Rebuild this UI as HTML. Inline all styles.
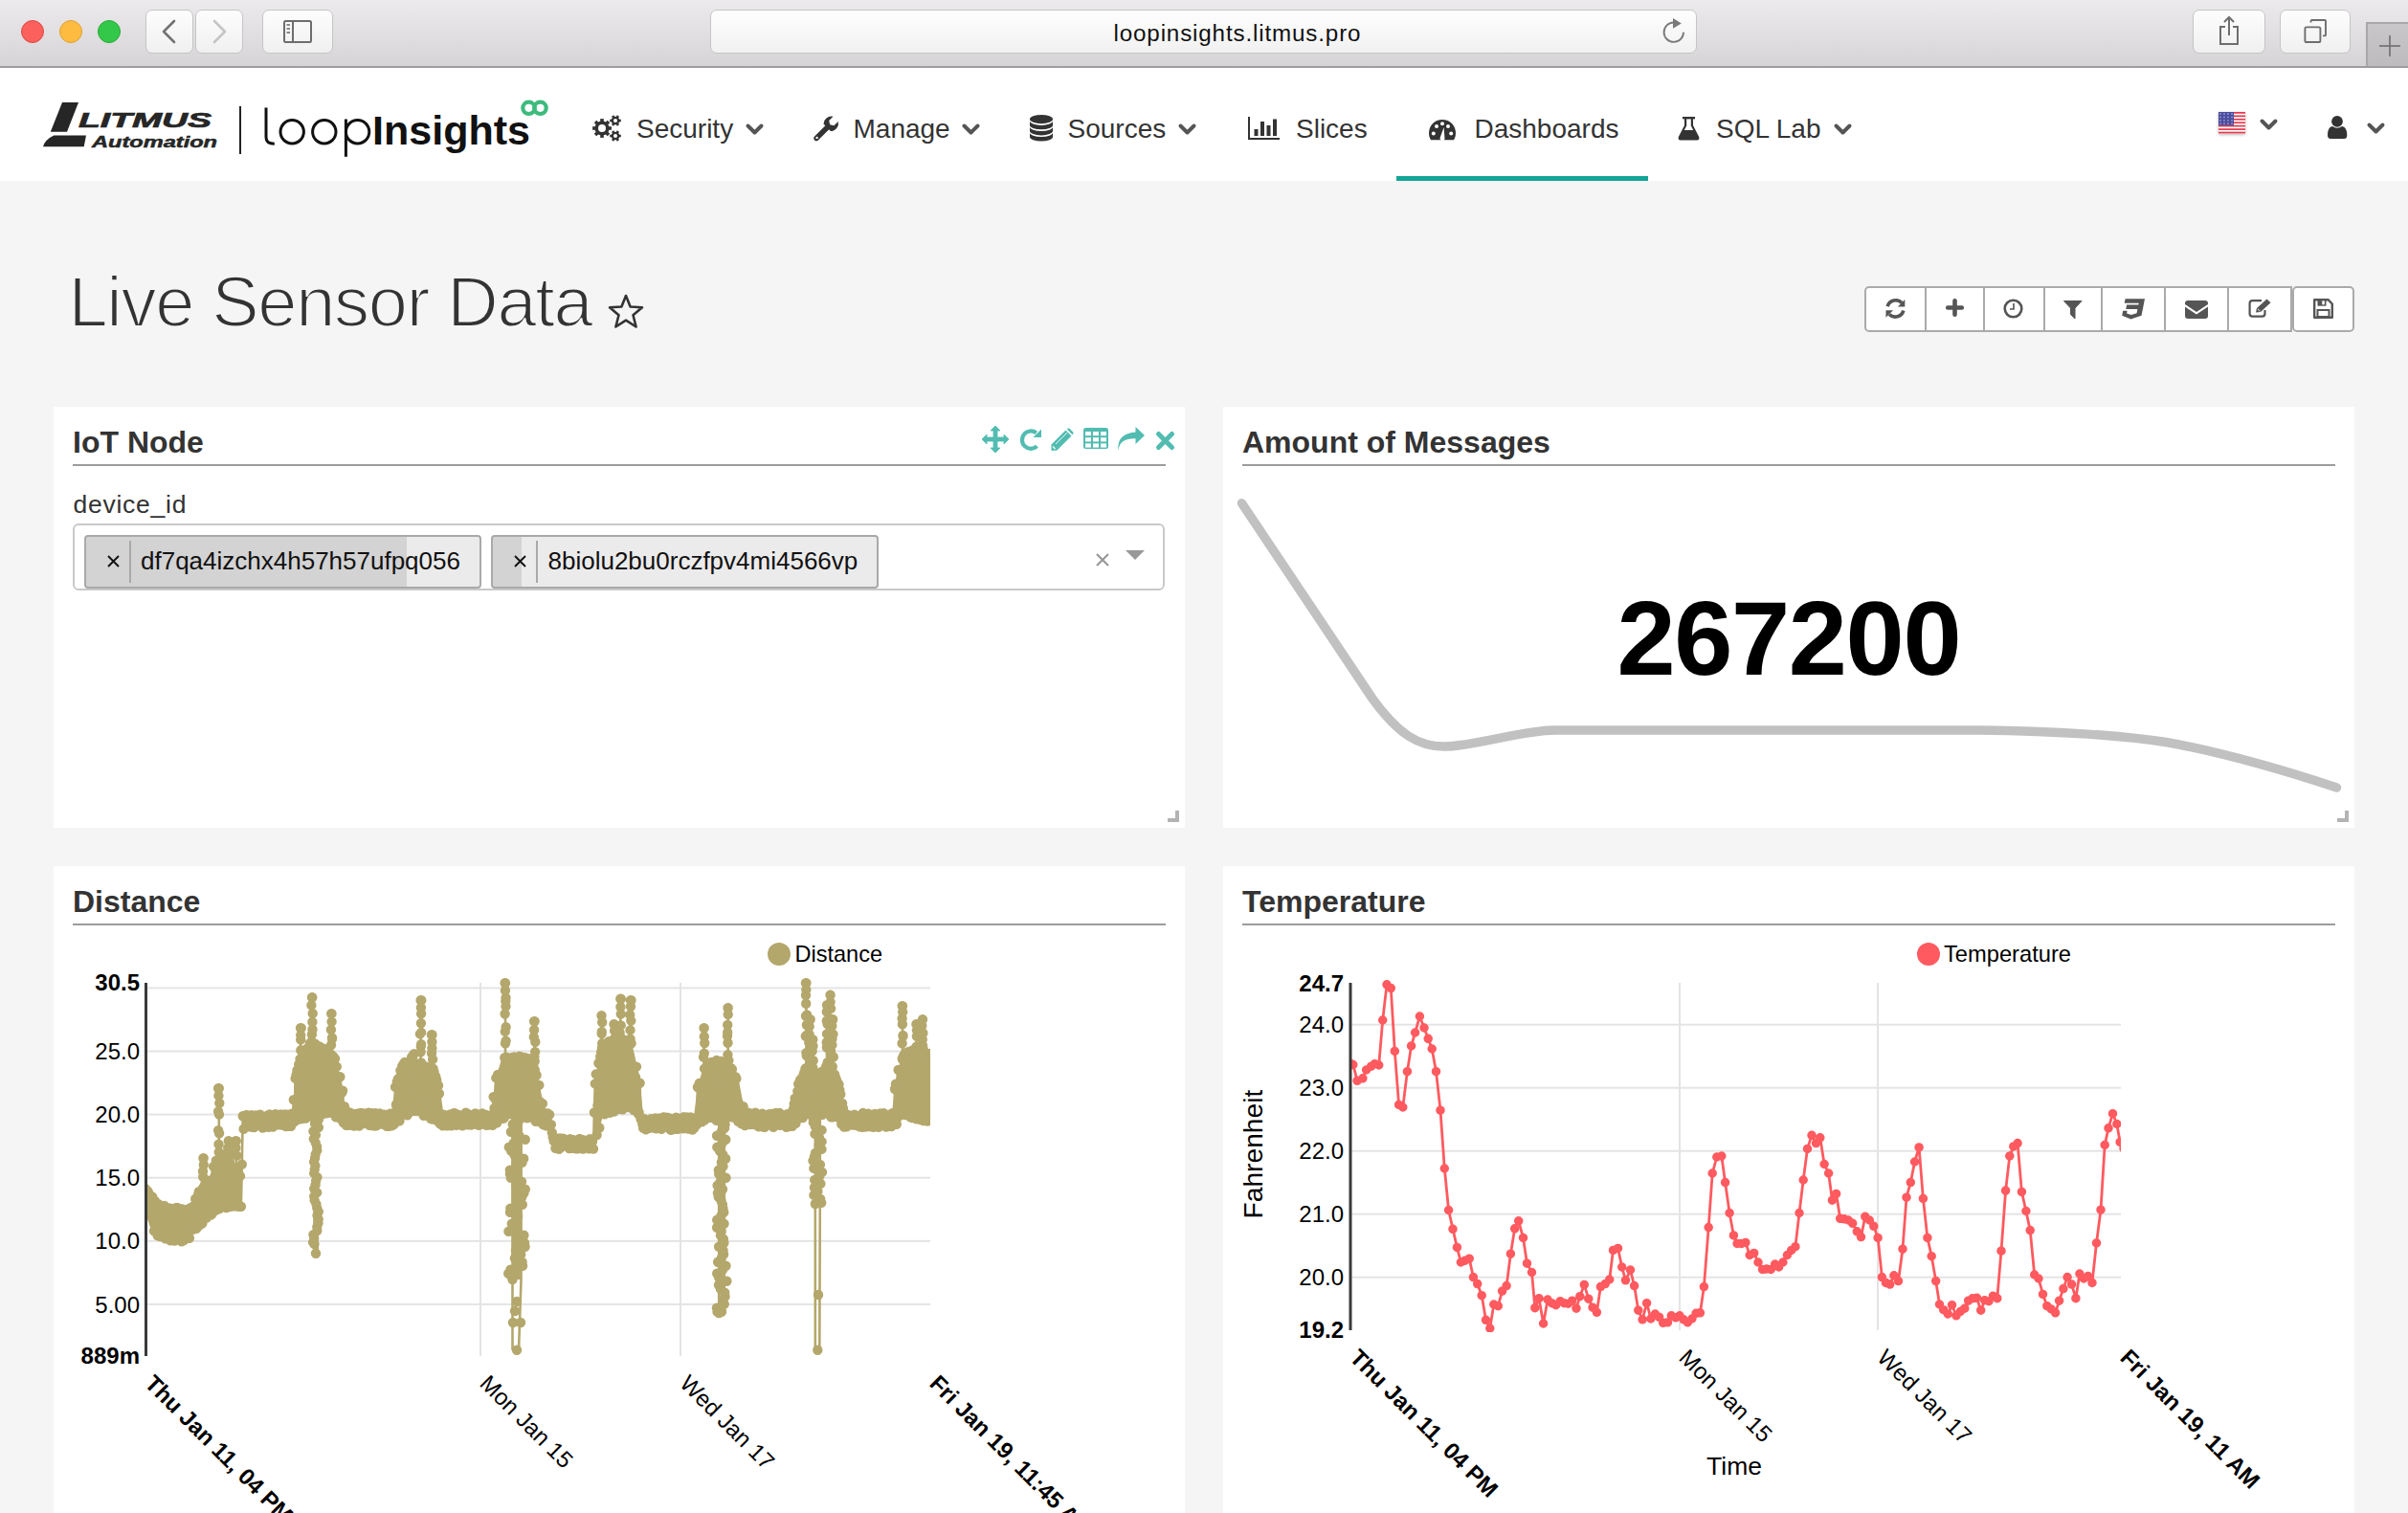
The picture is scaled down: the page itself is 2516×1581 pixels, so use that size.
<!DOCTYPE html>
<html><head><meta charset="utf-8"><title>Live Sensor Data</title>
<style>
html,body{margin:0;padding:0;}
body{width:2516px;height:1581px;position:relative;overflow:hidden;background:#f5f5f5;font-family:"Liberation Sans",sans-serif;}
.t{position:absolute;white-space:nowrap;}
svg{overflow:visible;}
</style></head><body>
<div style="position:absolute;left:0px;top:0px;width:2516px;height:69px;background:linear-gradient(#eceaec,#d6d4d6);"></div>
<div style="position:absolute;left:0px;top:69px;width:2516px;height:2px;background:#9e9c9e;"></div>
<div style="position:absolute;left:22px;top:21px;width:24px;height:24px;background:#fc605c;border-radius:50%;box-sizing:border-box;border:1px solid #de4a44;"></div>
<div style="position:absolute;left:62px;top:21px;width:24px;height:24px;background:#fdbc40;border-radius:50%;box-sizing:border-box;border:1px solid #dea235;"></div>
<div style="position:absolute;left:102px;top:21px;width:24px;height:24px;background:#34c84a;border-radius:50%;box-sizing:border-box;border:1px solid #27a935;"></div>
<div style="position:absolute;left:152px;top:10px;width:50px;height:46px;background:linear-gradient(#fdfdfd,#f0f0f0);border:1px solid #c6c5c6;border-radius:7px;box-sizing:border-box;"></div>
<div style="position:absolute;left:204px;top:10px;width:50px;height:46px;background:linear-gradient(#fdfdfd,#f0f0f0);border:1px solid #c6c5c6;border-radius:7px;box-sizing:border-box;"></div>
<div style="position:absolute;left:274px;top:10px;width:74px;height:46px;background:linear-gradient(#fdfdfd,#f0f0f0);border:1px solid #c6c5c6;border-radius:7px;box-sizing:border-box;"></div>
<svg style="position:absolute;left:168px;top:20px;" width="18" height="26" viewBox="0 0 18 26"><path d="M14 2 L3 13 L14 24" fill="none" stroke="#727272" stroke-width="2.6" stroke-linecap="round" stroke-linejoin="round"/></svg>
<svg style="position:absolute;left:220px;top:20px;" width="18" height="26" viewBox="0 0 18 26"><path d="M4 2 L15 13 L4 24" fill="none" stroke="#c4c4c4" stroke-width="2.6" stroke-linecap="round" stroke-linejoin="round"/></svg>
<svg style="position:absolute;left:295px;top:20px;" width="32" height="26" viewBox="0 0 32 26"><rect x="2" y="2" width="28" height="22" rx="1.5" fill="none" stroke="#6d6d6d" stroke-width="2"/><line x1="11" y1="2" x2="11" y2="24" stroke="#6d6d6d" stroke-width="2"/><line x1="4.5" y1="6" x2="8" y2="6" stroke="#6d6d6d" stroke-width="1.6"/><line x1="4.5" y1="10" x2="8" y2="10" stroke="#6d6d6d" stroke-width="1.6"/><line x1="4.5" y1="14" x2="8" y2="14" stroke="#6d6d6d" stroke-width="1.6"/></svg>
<div style="position:absolute;left:742px;top:10px;width:1031px;height:46px;background:linear-gradient(#fefefe,#f1f1f1);border:1px solid #c6c5c6;border-radius:7px;box-sizing:border-box;"></div>
<div class="t " style="left:1163.5px;top:21.10px;font-size:24.2px;line-height:27.03px;font-weight:normal;color:#111;letter-spacing:0.85px;">loopinsights.litmus.pro</div>
<svg style="position:absolute;left:1734px;top:19px;" width="28" height="28" viewBox="0 0 28 28"><path d="M25 14.7 A10.2 10.2 0 1 1 14.5 4.5" fill="none" stroke="#7a7a7a" stroke-width="1.9"/><path d="M14 0 L22.8 5.4 L14 10.8 Z" fill="#7a7a7a"/></svg>
<div style="position:absolute;left:2291px;top:10px;width:76px;height:46px;background:linear-gradient(#fdfdfd,#f0f0f0);border:1px solid #c6c5c6;border-radius:7px;box-sizing:border-box;"></div>
<div style="position:absolute;left:2382px;top:10px;width:74px;height:46px;background:linear-gradient(#fdfdfd,#f0f0f0);border:1px solid #c6c5c6;border-radius:7px;box-sizing:border-box;"></div>
<svg style="position:absolute;left:2317px;top:16px;" width="24" height="32" viewBox="0 0 24 32"><path d="M8 12 L3 12 L3 30 L21 30 L21 12 L16 12" fill="none" stroke="#6e6e6e" stroke-width="2"/><line x1="12" y1="2" x2="12" y2="21" stroke="#6e6e6e" stroke-width="2"/><path d="M7 7 L12 2 L17 7" fill="none" stroke="#6e6e6e" stroke-width="2"/></svg>
<svg style="position:absolute;left:2405px;top:19px;" width="30" height="28" viewBox="0 0 30 28"><rect x="3.4" y="9.4" width="16" height="15.6" rx="1.6" fill="none" stroke="#6e6e6e" stroke-width="1.9"/><path d="M9.6 4.4 L9.6 2.6 Q9.6 2 10.6 2 L24.2 2 Q25 2 25 3 L25 17.4 Q25 18.4 24 18.4 L22 18.4" fill="none" stroke="#6e6e6e" stroke-width="1.9"/></svg>
<div style="position:absolute;left:2472px;top:23px;width:44px;height:46px;background:linear-gradient(#c9c7c9,#bdbbbd);border-left:2px solid #a9a7a9;border-top:2px solid #a9a7a9;box-sizing:border-box;"></div>
<svg style="position:absolute;left:2485px;top:36px;" width="24" height="24" viewBox="0 0 24 24"><line x1="12" y1="1" x2="12" y2="23" stroke="#6e6e6e" stroke-width="1.6"/><line x1="1" y1="12" x2="23" y2="12" stroke="#6e6e6e" stroke-width="1.6"/></svg>
<div style="position:absolute;left:0px;top:71px;width:2516px;height:118px;background:#fff;"></div>
<div style="position:absolute;left:1459px;top:184px;width:263px;height:5px;background:#13a596;"></div>
<svg style="position:absolute;left:40px;top:100px;" width="60" height="60" viewBox="0 0 60 60"><path d="M25 7 L42 7 L30 37.7 L12.8 37.7 Z" fill="#262626"/><path d="M16.3 41.6 L50 41.6 L47.7 53.3 L5 53.3 Q7 46 16.3 41.6Z" fill="#262626"/></svg>
<svg style="position:absolute;left:0;top:0" width="2516" height="200"><text x="82" y="132.5" font-family="Liberation Sans" font-weight="bold" font-style="italic" font-size="21.5" fill="#262626" stroke="#262626" stroke-width="0.7" textLength="139" lengthAdjust="spacingAndGlyphs">LITMUS</text><text x="96" y="154" font-family="Liberation Sans" font-weight="bold" font-style="italic" font-size="16.5" fill="#262626" stroke="#262626" stroke-width="0.5" textLength="131" lengthAdjust="spacingAndGlyphs">Automation</text><text x="389" y="151" font-family="Liberation Sans" font-weight="bold" font-size="43" fill="#111" textLength="165" lengthAdjust="spacingAndGlyphs">Insights</text><circle cx="552.5" cy="112.8" r="6.2" fill="none" stroke="#3dbb7e" stroke-width="4.2"/><circle cx="564.5" cy="112.8" r="6.2" fill="none" stroke="#3dbb7e" stroke-width="4.2"/></svg>
<div style="position:absolute;left:250px;top:111px;width:2px;height:50px;background:#222;"></div>
<svg style="position:absolute;left:0px;top:0px;" width="1" height="1" viewBox="0 0 1 1"><g fill="none" stroke="#111" stroke-width="3"><path d="M278 112.5 L278 143.5 Q278 150.2 286.8 150.2"/><circle cx="305.2" cy="137.8" r="12.2"/><circle cx="338.8" cy="137.8" r="12.2"/><path d="M361.4 124.5 L361.4 163.8"/><circle cx="373.6" cy="137.8" r="12.2"/></g></svg>
<div class="t " style="left:665px;top:119.16px;font-size:28px;line-height:31.28px;font-weight:normal;color:#333;">Security</div>
<div class="t " style="left:891.5px;top:119.16px;font-size:28px;line-height:31.28px;font-weight:normal;color:#333;">Manage</div>
<div class="t " style="left:1115.5px;top:119.16px;font-size:28px;line-height:31.28px;font-weight:normal;color:#333;">Sources</div>
<div class="t " style="left:1354px;top:119.16px;font-size:28px;line-height:31.28px;font-weight:normal;color:#333;">Slices</div>
<div class="t " style="left:1540.5px;top:119.16px;font-size:28px;line-height:31.28px;font-weight:normal;color:#333;">Dashboards</div>
<div class="t " style="left:1793px;top:119.16px;font-size:28px;line-height:31.28px;font-weight:normal;color:#333;">SQL Lab</div>
<svg style="position:absolute;left:779px;top:129px" width="19" height="12" viewBox="0 0 19 12"><path d="M2.5 2.5 L9.5 9.5 L16.5 2.5" fill="none" stroke="#555" stroke-width="4.0" stroke-linecap="round" stroke-linejoin="round"/></svg>
<svg style="position:absolute;left:1005px;top:129px" width="19" height="12" viewBox="0 0 19 12"><path d="M2.5 2.5 L9.5 9.5 L16.5 2.5" fill="none" stroke="#555" stroke-width="4.0" stroke-linecap="round" stroke-linejoin="round"/></svg>
<svg style="position:absolute;left:1231px;top:129px" width="19" height="12" viewBox="0 0 19 12"><path d="M2.5 2.5 L9.5 9.5 L16.5 2.5" fill="none" stroke="#555" stroke-width="4.0" stroke-linecap="round" stroke-linejoin="round"/></svg>
<svg style="position:absolute;left:1916px;top:129px" width="19" height="12" viewBox="0 0 19 12"><path d="M2.5 2.5 L9.5 9.5 L16.5 2.5" fill="none" stroke="#555" stroke-width="4.0" stroke-linecap="round" stroke-linejoin="round"/></svg>
<svg style="position:absolute;left:2361px;top:124px" width="19" height="12" viewBox="0 0 19 12"><path d="M2.5 2.5 L9.5 9.5 L16.5 2.5" fill="none" stroke="#555" stroke-width="4.0" stroke-linecap="round" stroke-linejoin="round"/></svg>
<svg style="position:absolute;left:2473px;top:128px" width="19" height="12" viewBox="0 0 19 12"><path d="M2.5 2.5 L9.5 9.5 L16.5 2.5" fill="none" stroke="#555" stroke-width="4.0" stroke-linecap="round" stroke-linejoin="round"/></svg>
<svg style="position:absolute;left:0px;top:0px;" width="1" height="1" viewBox="0 0 1 1"><circle cx="629" cy="134" r="7.6" fill="#333"/><rect x="627.2" y="124.1" width="3.6" height="3.3000000000000007" fill="#333" transform="rotate(0.0 629 134)"/><rect x="627.2" y="124.1" width="3.6" height="3.3000000000000007" fill="#333" transform="rotate(45.0 629 134)"/><rect x="627.2" y="124.1" width="3.6" height="3.3000000000000007" fill="#333" transform="rotate(90.0 629 134)"/><rect x="627.2" y="124.1" width="3.6" height="3.3000000000000007" fill="#333" transform="rotate(135.0 629 134)"/><rect x="627.2" y="124.1" width="3.6" height="3.3000000000000007" fill="#333" transform="rotate(180.0 629 134)"/><rect x="627.2" y="124.1" width="3.6" height="3.3000000000000007" fill="#333" transform="rotate(225.0 629 134)"/><rect x="627.2" y="124.1" width="3.6" height="3.3000000000000007" fill="#333" transform="rotate(270.0 629 134)"/><rect x="627.2" y="124.1" width="3.6" height="3.3000000000000007" fill="#333" transform="rotate(315.0 629 134)"/><circle cx="629" cy="134" r="4.0" fill="#fff"/><circle cx="643" cy="126" r="4.3" fill="#333"/><rect x="641.7" y="120.2" width="2.6" height="2.5" fill="#333" transform="rotate(30.0 643 126)"/><rect x="641.7" y="120.2" width="2.6" height="2.5" fill="#333" transform="rotate(90.0 643 126)"/><rect x="641.7" y="120.2" width="2.6" height="2.5" fill="#333" transform="rotate(150.0 643 126)"/><rect x="641.7" y="120.2" width="2.6" height="2.5" fill="#333" transform="rotate(210.0 643 126)"/><rect x="641.7" y="120.2" width="2.6" height="2.5" fill="#333" transform="rotate(270.0 643 126)"/><rect x="641.7" y="120.2" width="2.6" height="2.5" fill="#333" transform="rotate(330.0 643 126)"/><circle cx="643" cy="126" r="2.0" fill="#fff"/><circle cx="643" cy="142" r="4.3" fill="#333"/><rect x="641.7" y="136.2" width="2.6" height="2.5" fill="#333" transform="rotate(30.0 643 142)"/><rect x="641.7" y="136.2" width="2.6" height="2.5" fill="#333" transform="rotate(90.0 643 142)"/><rect x="641.7" y="136.2" width="2.6" height="2.5" fill="#333" transform="rotate(150.0 643 142)"/><rect x="641.7" y="136.2" width="2.6" height="2.5" fill="#333" transform="rotate(210.0 643 142)"/><rect x="641.7" y="136.2" width="2.6" height="2.5" fill="#333" transform="rotate(270.0 643 142)"/><rect x="641.7" y="136.2" width="2.6" height="2.5" fill="#333" transform="rotate(330.0 643 142)"/><circle cx="643" cy="142" r="2.0" fill="#fff"/></svg>
<svg style="position:absolute;left:849px;top:121px;" width="28" height="28" viewBox="0 0 28 28"><line x1="4" y1="23.5" x2="16" y2="11.5" stroke="#333" stroke-width="5.4" stroke-linecap="round"/><path d="M11.5 8.5 A8.2 8.2 0 0 1 21.5 0.8 L17.2 5 L18.2 9.2 L22.4 10.2 L26.8 6 A8.2 8.2 0 0 1 18.8 16 Z" fill="#333"/><circle cx="4.6" cy="22.9" r="1.2" fill="#fff"/></svg>
<svg style="position:absolute;left:1076px;top:120.2px;" width="24" height="28" viewBox="0 0 24 28"><ellipse cx="12" cy="4.6" rx="12" ry="4.6" fill="#333"/><path d="M0 6.30 A12 4.6 0 0 0 24 6.30 L24 10.70 A12 4.6 0 0 1 0 10.70 Z" fill="#333"/><path d="M0 12.40 A12 4.6 0 0 0 24 12.40 L24 16.80 A12 4.6 0 0 1 0 16.80 Z" fill="#333"/><path d="M0 18.50 A12 4.6 0 0 0 24 18.50 L24 22.90 A12 4.6 0 0 1 0 22.90 Z" fill="#333"/></svg>
<svg style="position:absolute;left:1304px;top:122px;" width="33" height="24" viewBox="0 0 33 24"><rect x="0" y="0" width="2" height="24" fill="#333"/><rect x="0" y="22" width="33" height="2" fill="#333"/><rect x="6.5" y="13" width="4" height="7" fill="#333"/><rect x="13" y="5" width="4" height="15" fill="#333"/><rect x="19.5" y="9" width="4" height="11" fill="#333"/><rect x="26" y="2.5" width="4" height="17.5" fill="#333"/></svg>
<svg style="position:absolute;left:1493px;top:124.5px;" width="28" height="22" viewBox="0 0 28 22"><path d="M2 21.2 A14 14 0 1 1 26 21.2 Z" fill="#333"/><circle cx="4.8" cy="14.5" r="2" fill="#fff"/><circle cx="8" cy="7" r="2" fill="#fff"/><circle cx="14" cy="4.2" r="2" fill="#fff"/><circle cx="20" cy="7" r="2" fill="#fff"/><circle cx="23.2" cy="14.5" r="2" fill="#fff"/><path d="M11.8 18.5 L15.6 8 L16.4 18.8 A2.5 2.5 0 1 1 11.8 18.5Z" fill="#fff"/></svg>
<svg style="position:absolute;left:1753px;top:121.5px;" width="23" height="25" viewBox="0 0 23 25"><rect x="5" y="0" width="13" height="2.4" fill="#333"/><path d="M7 2 L7 9 L0.8 21 Q0 24.5 3 24.5 L20 24.5 Q23 24.5 22.2 21 L16 9 L16 2 L13.8 2 L13.8 9.6 L16.2 14 L6.8 14 L9.2 9.6 L9.2 2Z" fill="#333"/></svg>
<svg style="position:absolute;left:2318px;top:116.6px;filter:drop-shadow(0 1px 1.5px rgba(0,0,0,.3));" width="28" height="22.4" viewBox="0 0 28 22.4"><rect x="0" y="0" width="28" height="22.4" rx="1.5" fill="#fff"/><rect x="0" y="0.00" width="28" height="1.72" fill="#e5394d"/><rect x="0" y="3.45" width="28" height="1.72" fill="#e5394d"/><rect x="0" y="6.89" width="28" height="1.72" fill="#e5394d"/><rect x="0" y="10.34" width="28" height="1.72" fill="#e5394d"/><rect x="0" y="13.78" width="28" height="1.72" fill="#e5394d"/><rect x="0" y="17.23" width="28" height="1.72" fill="#e5394d"/><rect x="0" y="20.68" width="28" height="1.72" fill="#e5394d"/><rect x="0" y="0" width="16" height="14" fill="#4a4d9e"/><circle cx="2.0" cy="2.0" r="0.9" fill="#9a9cd0"/><circle cx="6.0" cy="2.0" r="0.9" fill="#9a9cd0"/><circle cx="10.0" cy="2.0" r="0.9" fill="#9a9cd0"/><circle cx="14.0" cy="2.0" r="0.9" fill="#9a9cd0"/><circle cx="2.0" cy="5.4" r="0.9" fill="#9a9cd0"/><circle cx="6.0" cy="5.4" r="0.9" fill="#9a9cd0"/><circle cx="10.0" cy="5.4" r="0.9" fill="#9a9cd0"/><circle cx="14.0" cy="5.4" r="0.9" fill="#9a9cd0"/><circle cx="2.0" cy="8.8" r="0.9" fill="#9a9cd0"/><circle cx="6.0" cy="8.8" r="0.9" fill="#9a9cd0"/><circle cx="10.0" cy="8.8" r="0.9" fill="#9a9cd0"/><circle cx="14.0" cy="8.8" r="0.9" fill="#9a9cd0"/><circle cx="2.0" cy="12.2" r="0.9" fill="#9a9cd0"/><circle cx="6.0" cy="12.2" r="0.9" fill="#9a9cd0"/><circle cx="10.0" cy="12.2" r="0.9" fill="#9a9cd0"/><circle cx="14.0" cy="12.2" r="0.9" fill="#9a9cd0"/></svg>
<svg style="position:absolute;left:2432px;top:121px;" width="21" height="25" viewBox="0 0 21 25"><circle cx="10" cy="5.9" r="5.9" fill="#333"/><path d="M0 20.5 Q0 11.5 5 11 Q10 14.5 15 11 Q20.3 11.5 20.3 20.5 Q20.3 24 17 24 L3.5 24 Q0 24 0 20.5Z" fill="#333"/></svg>
<div class="t " style="left:71.5px;top:275.03px;font-size:74px;line-height:82.66px;font-weight:normal;color:#333;letter-spacing:-1.3px;-webkit-text-stroke:2px #f5f5f5;">Live Sensor Data</div>
<svg style="position:absolute;left:634px;top:306px;" width="40" height="40" viewBox="0 0 40 40"><path d="M20 3 L24.6 14.5 L37 15.3 L27.5 23.2 L30.6 35.5 L20 28.7 L9.4 35.5 L12.5 23.2 L3 15.3 L15.4 14.5 Z" fill="none" stroke="#333" stroke-width="2.6" stroke-linejoin="round"/></svg>
<div style="position:absolute;left:1948px;top:299px;width:447px;height:48px;background:#fff;border:2px solid #aaa;border-radius:5px 0 0 5px;box-sizing:border-box;"></div>
<div style="position:absolute;left:2011px;top:299px;width:2px;height:48px;background:#aaa;"></div>
<div style="position:absolute;left:2072px;top:299px;width:2px;height:48px;background:#aaa;"></div>
<div style="position:absolute;left:2135px;top:299px;width:2px;height:48px;background:#aaa;"></div>
<div style="position:absolute;left:2195px;top:299px;width:2px;height:48px;background:#aaa;"></div>
<div style="position:absolute;left:2261px;top:299px;width:2px;height:48px;background:#aaa;"></div>
<div style="position:absolute;left:2327px;top:299px;width:2px;height:48px;background:#aaa;"></div>
<div style="position:absolute;left:2395px;top:299px;width:65px;height:48px;background:#fff;border:2px solid #aaa;border-radius:5px;box-sizing:border-box;"></div>
<svg style="position:absolute;left:1970px;top:312px;" width="21" height="21" viewBox="0 0 21 21"><path d="M2.2 8.2 A8.8 8.8 0 0 1 17 4.5" fill="none" stroke="#555" stroke-width="3.6"/><path d="M20.3 1 L20.3 8.4 L12.9 8.4 Z" fill="#555"/><path d="M18.8 12.5 A8.8 8.8 0 0 1 4 16.5" fill="none" stroke="#555" stroke-width="3.6"/><path d="M0.5 19.8 L0.5 12.3 L8 12.3 Z" fill="#555"/></svg>
<svg style="position:absolute;left:2033px;top:312px;" width="19" height="19" viewBox="0 0 19 19"><path d="M9.5 2.2 L9.5 16.8 M2.2 9.5 L16.8 9.5" stroke="#555" stroke-width="4.6" stroke-linecap="round"/></svg>
<svg style="position:absolute;left:2093px;top:312px;" width="21" height="21" viewBox="0 0 21 21"><circle cx="10.5" cy="10.5" r="8.8" fill="none" stroke="#555" stroke-width="2.6"/><path d="M11 5 L11 11 L7 11" fill="none" stroke="#555" stroke-width="1.6"/></svg>
<svg style="position:absolute;left:2156px;top:313.5px;" width="20" height="20" viewBox="0 0 20 20"><path d="M0.5 0.5 L19 0.5 L12 8 L12 19 L7.5 14.5 L7.5 8 Z" fill="#555" stroke="#555" stroke-width="1" stroke-linejoin="round"/></svg>
<svg style="position:absolute;left:2217px;top:311.5px;" width="24" height="23" viewBox="0 0 24 23"><path d="M3.6 0.3 L24 0.3 L20.5 17.8 L9.5 21.5 L0.2 17.8 L1.2 12.8 L5.6 12.8 L5.1 15.4 L9.8 17.1 L15.6 15.2 L16.4 11 L4.3 11 L5.1 6.6 L17.3 6.6 L17.8 4.7 L2.7 4.7 Z" fill="#555"/></svg>
<svg style="position:absolute;left:2283px;top:314px;" width="24" height="19" viewBox="0 0 24 19"><path d="M0 3 Q0 0 3 0 L21 0 Q24 0 24 3 L24 4 L12 12 L0 4 Z" fill="#555"/><path d="M0 6.6 L12 14.6 L24 6.6 L24 16 Q24 19 21 19 L3 19 Q0 19 0 16 Z" fill="#555"/></svg>
<svg style="position:absolute;left:2349px;top:311.5px;" width="25" height="20" viewBox="0 0 25 20"><path d="M14 2.2 L4.5 2.2 Q1.6 2.2 1.6 5 L1.6 15.8 Q1.6 18.6 4.5 18.6 L14.5 18.6 Q17.5 18.6 17.5 15.8 L17.5 12" fill="none" stroke="#555" stroke-width="2.2"/><path d="M8 14.5 L9 10 L19.5 0.5 L23.5 4.3 L13 14 Z" fill="#555"/><path d="M10 10.8 L12.5 13.2" stroke="#fff" stroke-width="1"/></svg>
<svg style="position:absolute;left:2417px;top:312px;" width="21" height="21" viewBox="0 0 21 21"><path d="M1.2 1.2 L15.5 1.2 L19.8 5.5 L19.8 19.8 L1.2 19.8 Z" fill="none" stroke="#555" stroke-width="2.4" stroke-linejoin="round"/><rect x="4.5" y="1.2" width="9" height="6.5" fill="#555"/><rect x="9.3" y="2.3" width="2.5" height="4" fill="#fff"/><rect x="4.5" y="12" width="12" height="7" fill="none" stroke="#555" stroke-width="2"/></svg>
<div style="position:absolute;left:56px;top:425px;width:1182px;height:440px;background:#fff;"></div>
<div style="position:absolute;left:1278px;top:425px;width:1182px;height:440px;background:#fff;"></div>
<div style="position:absolute;left:56px;top:905px;width:1182px;height:695px;background:#fff;"></div>
<div style="position:absolute;left:1278px;top:905px;width:1182px;height:695px;background:#fff;"></div>
<div class="t " style="left:76px;top:445.24px;font-size:32px;line-height:35.74px;font-weight:bold;color:#333;">IoT Node</div>
<div style="position:absolute;left:76px;top:485px;width:1142px;height:2px;background:#9c9c9c;"></div>
<div class="t " style="left:1298px;top:445.24px;font-size:32px;line-height:35.74px;font-weight:bold;color:#333;">Amount of Messages</div>
<div style="position:absolute;left:1298px;top:485px;width:1142px;height:2px;background:#9c9c9c;"></div>
<div class="t " style="left:76px;top:925.24px;font-size:32px;line-height:35.74px;font-weight:bold;color:#333;">Distance</div>
<div style="position:absolute;left:76px;top:965px;width:1142px;height:2px;background:#9c9c9c;"></div>
<div class="t " style="left:1298px;top:925.24px;font-size:32px;line-height:35.74px;font-weight:bold;color:#333;">Temperature</div>
<div style="position:absolute;left:1298px;top:965px;width:1142px;height:2px;background:#9c9c9c;"></div>
<svg style="position:absolute;left:1220px;top:847px;" width="12" height="12" viewBox="0 0 12 12"><path d="M10 0 L10 10 L0 10" fill="none" stroke="#b3b3b3" stroke-width="4"/></svg>
<svg style="position:absolute;left:2442px;top:847px;" width="12" height="12" viewBox="0 0 12 12"><path d="M10 0 L10 10 L0 10" fill="none" stroke="#b3b3b3" stroke-width="4"/></svg>
<svg style="position:absolute;left:1026px;top:445px;" width="28" height="28" viewBox="0 0 28 28"><path d="M14 0 L19 5 L16 5 L16 12 L23 12 L23 9 L28 14 L23 19 L23 16 L16 16 L16 23 L19 23 L14 28 L9 23 L12 23 L12 16 L5 16 L5 19 L0 14 L5 9 L5 12 L12 12 L12 5 L9 5 Z" fill="#52bcb1" stroke="#52bcb1" stroke-width="0.8" stroke-linejoin="round"/></svg>
<svg style="position:absolute;left:1063.5px;top:446.5px;" width="25" height="25" viewBox="0 0 25 25"><path d="M19.5 19.3 A9.2 9.2 0 1 1 18.8 5.4" fill="none" stroke="#52bcb1" stroke-width="4.2"/><path d="M24 1.5 L24 10 L15.5 10 Z" fill="#52bcb1"/></svg>
<svg style="position:absolute;left:1098px;top:447px;" width="24" height="25" viewBox="0 0 24 25"><path d="M0.5 17.5 L15.5 2.5 L21.5 8.5 L6.5 23.5 L0.5 24 Z" fill="#52bcb1"/><path d="M17.5 0.8 Q18.5 0 19.5 0.8 L23.2 4.5 Q24 5.5 23.2 6.5 L22.5 7.2 L16.8 1.5Z" fill="#52bcb1"/><line x1="5" y1="17" x2="17" y2="5" stroke="#fff" stroke-width="0.9"/><path d="M2 19.5 L4.5 22" stroke="#fff" stroke-width="1.3"/></svg>
<svg style="position:absolute;left:1132px;top:447px;" width="26" height="22" viewBox="0 0 26 22"><rect x="0" y="0" width="26" height="22" rx="2.5" fill="#52bcb1"/><rect x="2" y="4" width="6" height="4.2" fill="#fff"/><rect x="2" y="10.2" width="6" height="4.2" fill="#fff"/><rect x="2" y="16.4" width="6" height="4.2" fill="#fff"/><rect x="10" y="4" width="6" height="4.2" fill="#fff"/><rect x="10" y="10.2" width="6" height="4.2" fill="#fff"/><rect x="10" y="16.4" width="6" height="4.2" fill="#fff"/><rect x="18" y="4" width="6" height="4.2" fill="#fff"/><rect x="18" y="10.2" width="6" height="4.2" fill="#fff"/><rect x="18" y="16.4" width="6" height="4.2" fill="#fff"/></svg>
<svg style="position:absolute;left:1168px;top:446px;" width="28" height="25" viewBox="0 0 28 25"><path d="M0.5 25 Q-1 12 9 7.8 Q13 5.8 18.5 5.6 L18.5 0 L28 9 L18.5 18 L18.5 12.3 Q10 12 5 15.5 Q1 18.5 0.5 25Z" fill="#52bcb1"/></svg>
<svg style="position:absolute;left:1208px;top:450.5px;" width="19" height="19" viewBox="0 0 19 19"><path d="M2.5 2.5 L16.5 16.5 M16.5 2.5 L2.5 16.5" stroke="#52bcb1" stroke-width="5" stroke-linecap="round"/></svg>
<div class="t " style="left:76.5px;top:513.02px;font-size:26.5px;line-height:29.60px;font-weight:normal;color:#333;letter-spacing:0.75px;">device_id</div>
<div style="position:absolute;left:76px;top:547px;width:1141px;height:70px;background:#fff;border:2px solid #c9c9c9;border-radius:6px;box-sizing:border-box;"></div>
<div style="position:absolute;left:88px;top:559px;width:415px;height:56px;background:linear-gradient(to right,#d3d3d3 335px,#ebebeb 335px);border:2px solid #a9a9a9;border-radius:4px;box-sizing:border-box;"></div>
<div style="position:absolute;left:135.0px;top:565px;width:2.0px;height:44px;background:#a9a9a9;"></div>
<svg style="position:absolute;left:111.5px;top:580px;" width="13" height="13" viewBox="0 0 13 13"><path d="M1 1 L12 12 M12 1 L1 12" stroke="#111" stroke-width="1.9"/></svg>
<div class="t " style="left:147px;top:571.97px;font-size:26px;line-height:29.04px;font-weight:normal;color:#111;">df7qa4izchx4h57h57ufpq056</div>
<div style="position:absolute;left:513px;top:559px;width:405px;height:56px;background:linear-gradient(to right,#d3d3d3 30px,#ebebeb 30px);border:2px solid #a9a9a9;border-radius:4px;box-sizing:border-box;"></div>
<div style="position:absolute;left:560.0px;top:565px;width:2.0px;height:44px;background:#a9a9a9;"></div>
<svg style="position:absolute;left:536.5px;top:580px;" width="13" height="13" viewBox="0 0 13 13"><path d="M1 1 L12 12 M12 1 L1 12" stroke="#111" stroke-width="1.9"/></svg>
<div class="t " style="left:572.5px;top:571.97px;font-size:26px;line-height:29.04px;font-weight:normal;color:#111;">8biolu2bu0rczfpv4mi4566vp</div>
<svg style="position:absolute;left:1145px;top:578px;" width="14" height="14" viewBox="0 0 14 14"><path d="M1 1 L13 13 M13 1 L1 13" stroke="#999" stroke-width="2.2"/></svg>
<svg style="position:absolute;left:1176px;top:575px;" width="20" height="10" viewBox="0 0 20 10"><path d="M0 0 L20 0 L10 10 Z" fill="#999"/></svg>
<svg style="position:absolute;left:0;top:0" width="2516" height="1581"><path d="M1297.5 525.8 L1434 730 C1460 766, 1482 781, 1511 780 C1545 779, 1590 763, 1625 763 L2068 763 C2140 764, 2210 767, 2266 776 C2320 786, 2390 806, 2441.5 823" fill="none" stroke="#c1c1c1" stroke-width="9.5" stroke-linecap="round" stroke-linejoin="round"/></svg>
<div class="t " style="left:1689.5px;top:605.95px;font-size:110px;line-height:122.87px;font-weight:bold;color:#000;letter-spacing:-1.4px;">267200</div>
<svg style="position:absolute;left:0;top:0" width="2516" height="1581" font-family="Liberation Sans"><rect x="153" y="1031.4" width="819" height="2" fill="#e4e4e4"/><rect x="153" y="1097.5" width="819" height="2" fill="#e4e4e4"/><rect x="153" y="1163.6" width="819" height="2" fill="#e4e4e4"/><rect x="153" y="1229.7" width="819" height="2" fill="#e4e4e4"/><rect x="153" y="1295.8" width="819" height="2" fill="#e4e4e4"/><rect x="153" y="1361.9" width="819" height="2" fill="#e4e4e4"/><rect x="501" y="1027" width="2" height="390" fill="#e4e4e4"/><rect x="710" y="1027" width="2" height="390" fill="#e4e4e4"/><text x="146" y="1035.1" text-anchor="end" font-size="24" font-weight="bold" fill="#000">30.5</text><text x="146" y="1107.1" text-anchor="end" font-size="24" font-weight="normal" fill="#000">25.0</text><text x="146" y="1173.2" text-anchor="end" font-size="24" font-weight="normal" fill="#000">20.0</text><text x="146" y="1239.3" text-anchor="end" font-size="24" font-weight="normal" fill="#000">15.0</text><text x="146" y="1305.4" text-anchor="end" font-size="24" font-weight="normal" fill="#000">10.0</text><text x="146" y="1371.5" text-anchor="end" font-size="24" font-weight="normal" fill="#000">5.00</text><text x="146" y="1425.2" text-anchor="end" font-size="24" font-weight="bold" fill="#000">889m</text><text transform="translate(150,1447) rotate(45)" font-size="24" font-weight="bold" fill="#000">Thu Jan 11, 04 PM</text><text transform="translate(500,1447) rotate(45)" font-size="24" font-weight="normal" fill="#000">Mon Jan 15</text><text transform="translate(709,1447) rotate(45)" font-size="24" font-weight="normal" fill="#000">Wed Jan 17</text><text transform="translate(970,1447) rotate(45)" font-size="24" font-weight="bold" fill="#000">Fri Jan 19, 11:45 AM</text><circle cx="814" cy="997" r="12" fill="#b4a76c"/><text x="830.5" y="1004.7" font-size="24" fill="#000" textLength="91.5" lengthAdjust="spacingAndGlyphs">Distance</text><clipPath id="cpd"><rect x="153" y="1022" width="819" height="400"/></clipPath><g clip-path="url(#cpd)"><path d="M152.0 1240.2L153.0 1241.5L154.0 1242.8L155.0 1244.2L156.0 1245.5L157.0 1246.8L158.0 1248.2L159.0 1249.2L160.0 1250.2L161.0 1251.2L162.0 1252.2L163.0 1253.2L164.0 1254.2L165.0 1255.2L166.0 1256.2L167.0 1256.4L168.0 1256.7L169.0 1257.0L170.0 1257.3L171.0 1257.6L172.0 1257.9L173.0 1258.2L174.0 1258.4L175.0 1258.7L176.0 1259.0L177.0 1259.3L178.0 1259.6L179.0 1259.9L180.0 1260.2L181.0 1260.3L182.0 1260.4L183.0 1260.5L184.0 1260.7L185.0 1260.8L186.0 1260.9L187.0 1261.0L188.0 1261.2L189.0 1261.3L190.0 1261.4L191.0 1261.5L192.0 1261.7L193.0 1261.8L194.0 1261.9L195.0 1262.0L196.0 1262.2L197.0 1260.8L198.0 1259.5L199.0 1258.2L200.0 1256.8L201.0 1255.5L202.0 1254.2L203.0 1252.4L204.0 1250.7L205.0 1248.9L206.0 1247.2L207.0 1245.4L208.0 1243.7L209.0 1241.9L210.0 1240.2L211.0 1239.2L212.0 1238.2L213.0 1237.2L214.0 1236.2L215.0 1235.2L216.0 1234.2L217.0 1233.2L218.0 1232.2L219.0 1229.3L220.0 1226.4L221.0 1223.5L222.0 1220.7L223.0 1217.8L224.0 1214.9L225.0 1212.0L226.0 1209.2L227.0 1208.7L228.0 1208.2L229.0 1207.7L230.0 1207.2L231.0 1206.7L232.0 1206.2L233.0 1205.7L234.0 1205.2L235.0 1204.7L236.0 1204.2L237.0 1206.0L238.0 1207.9L239.0 1209.8L240.0 1211.7L241.0 1213.5L242.0 1215.4L243.0 1217.3L244.0 1219.2L245.0 1220.0L246.0 1220.9L247.0 1221.8L248.0 1222.7L249.0 1223.5L250.0 1224.4L251.0 1225.3L252.0 1226.2L253.0 1184.8L254.0 1164.1L255.0 1164.1L256.0 1164.1L257.0 1164.0L258.0 1164.0L259.0 1164.0L260.0 1163.9L261.0 1163.9L262.0 1163.8L263.0 1163.8L264.0 1163.8L265.0 1163.7L266.0 1163.7L267.0 1163.6L268.0 1163.6L269.0 1163.6L270.0 1163.5L271.0 1163.5L272.0 1163.5L273.0 1163.4L274.0 1163.4L275.0 1163.3L276.0 1163.3L277.0 1163.3L278.0 1163.2L279.0 1163.2L280.0 1163.2L281.0 1163.1L282.0 1163.1L283.0 1163.0L284.0 1163.0L285.0 1163.0L286.0 1162.9L287.0 1162.9L288.0 1162.8L289.0 1162.8L290.0 1162.8L291.0 1162.7L292.0 1162.7L293.0 1162.7L294.0 1162.6L295.0 1162.6L296.0 1162.5L297.0 1162.5L298.0 1162.5L299.0 1162.4L300.0 1162.4L301.0 1162.4L302.0 1162.3L303.0 1162.3L304.0 1162.2L305.0 1162.2L306.0 1162.2L307.0 1143.2L308.0 1124.2L309.0 1121.0L310.0 1117.9L311.0 1114.8L312.0 1111.7L313.0 1108.5L314.0 1105.4L315.0 1102.3L316.0 1099.2L317.0 1097.9L318.0 1096.6L319.0 1095.3L320.0 1094.0L321.0 1092.7L322.0 1091.4L323.0 1090.1L324.0 1088.8L325.0 1087.5L326.0 1086.2L327.0 1086.8L328.0 1087.5L329.0 1088.2L330.0 1088.8L331.0 1089.5L332.0 1090.2L333.0 1090.8L334.0 1091.5L335.0 1092.2L336.0 1092.8L337.0 1093.5L338.0 1094.2L339.0 1095.0L340.0 1095.8L341.0 1096.7L342.0 1097.5L343.0 1098.3L344.0 1099.2L345.0 1100.0L346.0 1100.8L347.0 1101.7L348.0 1102.5L349.0 1103.3L350.0 1104.2L351.0 1107.7L352.0 1111.3L353.0 1114.9L354.0 1118.4L355.0 1122.0L356.0 1125.6L357.0 1129.2L358.0 1137.2L359.0 1145.2L360.0 1153.2L361.0 1161.2L362.0 1161.2L363.0 1161.2L364.0 1161.2L365.0 1161.2L366.0 1161.3L367.0 1161.3L368.0 1161.3L369.0 1161.3L370.0 1161.3L371.0 1161.4L372.0 1161.4L373.0 1161.4L374.0 1161.4L375.0 1161.5L376.0 1161.5L377.0 1161.5L378.0 1161.5L379.0 1161.5L380.0 1161.6L381.0 1161.6L382.0 1161.6L383.0 1161.6L384.0 1161.6L385.0 1161.7L386.0 1161.7L387.0 1161.7L388.0 1161.7L389.0 1161.7L390.0 1161.8L391.0 1161.8L392.0 1161.8L393.0 1161.8L394.0 1161.8L395.0 1161.9L396.0 1161.9L397.0 1161.9L398.0 1161.9L399.0 1162.0L400.0 1162.0L401.0 1162.0L402.0 1162.0L403.0 1162.0L404.0 1162.1L405.0 1162.1L406.0 1162.1L407.0 1162.1L408.0 1162.1L409.0 1162.2L410.0 1155.2L411.0 1148.2L412.0 1141.2L413.0 1134.2L414.0 1131.0L415.0 1127.9L416.0 1124.7L417.0 1121.6L418.0 1118.4L419.0 1115.3L420.0 1112.2L421.0 1111.0L422.0 1109.8L423.0 1108.7L424.0 1107.5L425.0 1106.3L426.0 1105.2L427.0 1104.0L428.0 1102.8L429.0 1101.7L430.0 1100.5L431.0 1099.3L432.0 1098.2L433.0 1100.2L434.0 1102.2L435.0 1104.2L436.0 1106.2L437.0 1108.2L438.0 1110.2L439.0 1112.2L440.0 1114.2L441.0 1114.0L442.0 1113.8L443.0 1113.7L444.0 1113.5L445.0 1113.3L446.0 1113.2L447.0 1113.0L448.0 1112.8L449.0 1112.7L450.0 1112.5L451.0 1112.3L452.0 1112.2L453.0 1115.5L454.0 1118.9L455.0 1122.3L456.0 1125.7L457.0 1129.0L458.0 1132.4L459.0 1135.8L460.0 1139.2L461.0 1146.5L462.0 1153.8L463.0 1161.2L464.0 1161.2L465.0 1161.2L466.0 1161.2L467.0 1161.2L468.0 1161.3L469.0 1161.3L470.0 1161.3L471.0 1161.3L472.0 1161.3L473.0 1161.4L474.0 1161.4L475.0 1161.4L476.0 1161.4L477.0 1161.4L478.0 1161.5L479.0 1161.5L480.0 1161.5L481.0 1161.5L482.0 1161.5L483.0 1161.6L484.0 1161.6L485.0 1161.6L486.0 1161.6L487.0 1161.6L488.0 1161.7L489.0 1161.7L490.0 1161.7L491.0 1161.7L492.0 1161.7L493.0 1161.7L494.0 1161.8L495.0 1161.8L496.0 1161.8L497.0 1161.8L498.0 1161.8L499.0 1161.9L500.0 1161.9L501.0 1161.9L502.0 1161.9L503.0 1161.9L504.0 1162.0L505.0 1162.0L506.0 1162.0L507.0 1162.0L508.0 1162.0L509.0 1162.1L510.0 1162.1L511.0 1162.1L512.0 1162.1L513.0 1162.1L514.0 1162.2L515.0 1151.2L516.0 1140.2L517.0 1129.2L518.0 1126.0L519.0 1122.9L520.0 1119.8L521.0 1116.7L522.0 1113.5L523.0 1110.4L524.0 1107.3L525.0 1104.2L526.0 1104.0L527.0 1103.9L528.0 1103.8L529.0 1103.6L530.0 1103.5L531.0 1103.4L532.0 1103.2L533.0 1103.1L534.0 1103.0L535.0 1102.8L536.0 1102.7L537.0 1102.6L538.0 1102.4L539.0 1102.3L540.0 1102.2L541.0 1102.3L542.0 1102.4L543.0 1102.6L544.0 1102.7L545.0 1102.8L546.0 1103.0L547.0 1103.1L548.0 1103.2L549.0 1103.4L550.0 1103.5L551.0 1103.6L552.0 1103.8L553.0 1103.9L554.0 1104.0L555.0 1104.2L556.0 1107.3L557.0 1110.4L558.0 1113.5L559.0 1116.7L560.0 1119.8L561.0 1122.9L562.0 1126.0L563.0 1129.2L564.0 1134.5L565.0 1139.8L566.0 1145.2L567.0 1150.5L568.0 1155.8L569.0 1161.2L570.0 1161.3L571.0 1161.4L572.0 1161.6L573.0 1161.7L574.0 1161.9L575.0 1162.0L576.0 1162.2L577.0 1175.2L578.0 1188.2L579.0 1188.2L580.0 1188.2L581.0 1188.2L582.0 1188.3L583.0 1188.3L584.0 1188.3L585.0 1188.3L586.0 1188.4L587.0 1188.4L588.0 1188.4L589.0 1188.4L590.0 1188.4L591.0 1188.5L592.0 1188.5L593.0 1188.5L594.0 1188.5L595.0 1188.6L596.0 1188.6L597.0 1188.6L598.0 1188.6L599.0 1188.7L600.0 1188.7L601.0 1188.7L602.0 1188.7L603.0 1188.8L604.0 1188.8L605.0 1188.8L606.0 1188.8L607.0 1188.9L608.0 1188.9L609.0 1188.9L610.0 1188.9L611.0 1188.9L612.0 1189.0L613.0 1189.0L614.0 1189.0L615.0 1189.0L616.0 1189.1L617.0 1189.1L618.0 1189.1L619.0 1189.1L620.0 1189.2L621.0 1156.7L622.0 1124.2L623.0 1119.8L624.0 1115.4L625.0 1111.0L626.0 1106.7L627.0 1102.3L628.0 1097.9L629.0 1093.5L630.0 1089.2L631.0 1088.8L632.0 1088.4L633.0 1088.0L634.0 1087.6L635.0 1087.2L636.0 1086.8L637.0 1086.4L638.0 1086.0L639.0 1085.7L640.0 1085.3L641.0 1084.9L642.0 1084.5L643.0 1084.1L644.0 1083.7L645.0 1083.3L646.0 1082.9L647.0 1082.5L648.0 1082.2L649.0 1082.7L650.0 1083.3L651.0 1083.9L652.0 1084.5L653.0 1085.1L654.0 1085.7L655.0 1086.2L656.0 1086.8L657.0 1087.4L658.0 1088.0L659.0 1088.6L660.0 1089.2L661.0 1093.5L662.0 1097.9L663.0 1102.3L664.0 1106.7L665.0 1111.0L666.0 1115.4L667.0 1119.8L668.0 1124.2L669.0 1134.2L670.0 1144.2L671.0 1154.2L672.0 1164.2L673.0 1165.2L674.0 1166.2L675.0 1166.2L676.0 1166.2L677.0 1166.2L678.0 1166.2L679.0 1166.2L680.0 1166.2L681.0 1166.2L682.0 1166.2L683.0 1166.2L684.0 1166.2L685.0 1166.2L686.0 1166.2L687.0 1166.2L688.0 1166.2L689.0 1166.2L690.0 1166.2L691.0 1166.2L692.0 1166.2L693.0 1166.2L694.0 1166.2L695.0 1166.2L696.0 1166.2L697.0 1166.2L698.0 1166.2L699.0 1166.2L700.0 1166.2L701.0 1166.2L702.0 1166.2L703.0 1166.2L704.0 1166.2L705.0 1166.2L706.0 1166.2L707.0 1166.2L708.0 1166.2L709.0 1166.2L710.0 1166.2L711.0 1166.2L712.0 1166.2L713.0 1166.2L714.0 1166.2L715.0 1166.2L716.0 1166.2L717.0 1166.2L718.0 1166.2L719.0 1166.2L720.0 1166.2L721.0 1166.2L722.0 1166.2L723.0 1166.2L724.0 1166.2L725.0 1166.2L726.0 1158.2L727.0 1150.2L728.0 1142.2L729.0 1134.2L730.0 1131.0L731.0 1127.9L732.0 1124.7L733.0 1121.6L734.0 1118.4L735.0 1115.3L736.0 1112.2L737.0 1111.7L738.0 1111.2L739.0 1110.7L740.0 1110.2L741.0 1109.7L742.0 1109.2L743.0 1108.7L744.0 1108.2L745.0 1107.7L746.0 1107.2L747.0 1106.7L748.0 1106.2L749.0 1106.4L750.0 1106.6L751.0 1106.8L752.0 1107.0L753.0 1107.2L754.0 1107.4L755.0 1107.7L756.0 1107.9L757.0 1108.1L758.0 1108.3L759.0 1108.5L760.0 1108.7L761.0 1108.9L762.0 1109.2L763.0 1111.2L764.0 1113.2L765.0 1115.2L766.0 1117.2L767.0 1119.2L768.0 1121.2L769.0 1123.2L770.0 1125.2L771.0 1127.2L772.0 1129.2L773.0 1134.5L774.0 1139.8L775.0 1145.2L776.0 1150.5L777.0 1155.8L778.0 1161.2L779.0 1161.2L780.0 1161.2L781.0 1161.2L782.0 1161.2L783.0 1161.3L784.0 1161.3L785.0 1161.3L786.0 1161.3L787.0 1161.3L788.0 1161.4L789.0 1161.4L790.0 1161.4L791.0 1161.4L792.0 1161.4L793.0 1161.5L794.0 1161.5L795.0 1161.5L796.0 1161.5L797.0 1161.5L798.0 1161.6L799.0 1161.6L800.0 1161.6L801.0 1161.6L802.0 1161.6L803.0 1161.7L804.0 1161.7L805.0 1161.7L806.0 1161.7L807.0 1161.7L808.0 1161.8L809.0 1161.8L810.0 1161.8L811.0 1161.8L812.0 1161.8L813.0 1161.9L814.0 1161.9L815.0 1161.9L816.0 1161.9L817.0 1161.9L818.0 1162.0L819.0 1162.0L820.0 1162.0L821.0 1162.0L822.0 1162.0L823.0 1162.1L824.0 1162.1L825.0 1162.1L826.0 1162.1L827.0 1162.1L828.0 1162.2L829.0 1155.2L830.0 1148.2L831.0 1141.2L832.0 1134.2L833.0 1132.2L834.0 1130.2L835.0 1128.2L836.0 1126.2L837.0 1124.2L838.0 1122.2L839.0 1120.2L840.0 1118.2L841.0 1116.2L842.0 1114.2L843.0 1114.8L844.0 1115.4L845.0 1116.0L846.0 1116.6L847.0 1117.2L848.0 1117.9L849.0 1118.5L850.0 1119.1L851.0 1119.7L852.0 1120.3L853.0 1120.9L854.0 1121.5L855.0 1122.2L856.0 1121.0L857.0 1119.8L858.0 1118.6L859.0 1117.4L860.0 1116.3L861.0 1115.1L862.0 1113.9L863.0 1112.7L864.0 1111.5L865.0 1110.3L866.0 1109.2L867.0 1111.2L868.0 1113.2L869.0 1115.2L870.0 1117.2L871.0 1119.2L872.0 1121.2L873.0 1123.2L874.0 1125.2L875.0 1127.2L876.0 1129.2L877.0 1134.5L878.0 1139.8L879.0 1145.2L880.0 1150.5L881.0 1155.8L882.0 1161.2L883.0 1161.2L884.0 1161.2L885.0 1161.2L886.0 1161.2L887.0 1161.3L888.0 1161.3L889.0 1161.3L890.0 1161.3L891.0 1161.3L892.0 1161.4L893.0 1161.4L894.0 1161.4L895.0 1161.4L896.0 1161.4L897.0 1161.5L898.0 1161.5L899.0 1161.5L900.0 1161.5L901.0 1161.5L902.0 1161.6L903.0 1161.6L904.0 1161.6L905.0 1161.6L906.0 1161.6L907.0 1161.7L908.0 1161.7L909.0 1161.7L910.0 1161.7L911.0 1161.7L912.0 1161.8L913.0 1161.8L914.0 1161.8L915.0 1161.8L916.0 1161.8L917.0 1161.9L918.0 1161.9L919.0 1161.9L920.0 1161.9L921.0 1161.9L922.0 1162.0L923.0 1162.0L924.0 1162.0L925.0 1162.0L926.0 1162.0L927.0 1162.1L928.0 1162.1L929.0 1162.1L930.0 1162.1L931.0 1162.1L932.0 1162.2L933.0 1153.6L934.0 1145.0L935.0 1136.4L936.0 1127.8L937.0 1119.2L938.0 1116.7L939.0 1114.2L940.0 1111.7L941.0 1109.2L942.0 1106.7L943.0 1104.2L944.0 1101.7L945.0 1099.2L946.0 1098.8L947.0 1098.4L948.0 1098.0L949.0 1097.6L950.0 1097.2L951.0 1096.9L952.0 1096.5L953.0 1096.1L954.0 1095.7L955.0 1095.3L956.0 1094.9L957.0 1094.5L958.0 1094.2L959.0 1094.5L960.0 1094.9L961.0 1095.2L962.0 1095.6L963.0 1095.9L964.0 1096.3L965.0 1096.7L966.0 1097.0L967.0 1097.4L968.0 1097.7L969.0 1098.1L970.0 1098.4L971.0 1098.8L972.0 1099.2L972.0 1173.8L971.0 1173.6L970.0 1173.4L969.0 1173.2L968.0 1173.0L967.0 1172.8L966.0 1172.6L965.0 1172.3L964.0 1172.1L963.0 1171.9L962.0 1171.7L961.0 1171.5L960.0 1171.3L959.0 1171.1L958.0 1170.8L957.0 1170.6L956.0 1170.4L955.0 1170.1L954.0 1169.9L953.0 1169.7L952.0 1169.5L951.0 1169.2L950.0 1169.0L949.0 1168.8L948.0 1168.5L947.0 1168.3L946.0 1168.1L945.0 1167.8L944.0 1168.8L943.0 1169.8L942.0 1170.8L941.0 1171.8L940.0 1172.8L939.0 1173.8L938.0 1174.8L937.0 1175.8L936.0 1176.4L935.0 1177.0L934.0 1177.6L933.0 1178.2L932.0 1178.8L931.0 1178.8L930.0 1178.8L929.0 1178.8L928.0 1178.8L927.0 1178.8L926.0 1178.8L925.0 1178.8L924.0 1178.8L923.0 1178.8L922.0 1178.8L921.0 1178.8L920.0 1178.8L919.0 1178.8L918.0 1178.8L917.0 1178.8L916.0 1178.8L915.0 1178.8L914.0 1178.8L913.0 1178.8L912.0 1178.8L911.0 1178.8L910.0 1178.8L909.0 1178.8L908.0 1178.8L907.0 1178.8L906.0 1178.8L905.0 1178.8L904.0 1178.8L903.0 1178.8L902.0 1178.8L901.0 1178.8L900.0 1178.8L899.0 1178.8L898.0 1178.8L897.0 1178.8L896.0 1178.8L895.0 1178.8L894.0 1178.8L893.0 1178.8L892.0 1178.8L891.0 1178.8L890.0 1178.8L889.0 1178.8L888.0 1178.8L887.0 1178.8L886.0 1178.8L885.0 1178.8L884.0 1178.8L883.0 1178.8L882.0 1178.8L881.0 1178.0L880.0 1177.2L879.0 1176.3L878.0 1175.5L877.0 1174.7L876.0 1173.8L875.0 1173.2L874.0 1172.6L873.0 1172.0L872.0 1171.4L871.0 1170.8L870.0 1170.2L869.0 1169.6L868.0 1169.0L867.0 1168.4L866.0 1167.8L865.0 1167.7L864.0 1167.5L863.0 1167.3L862.0 1167.1L861.0 1166.9L860.0 1166.7L859.0 1166.6L858.0 1166.4L857.0 1166.2L856.0 1166.0L855.0 1165.8L854.0 1166.0L853.0 1166.1L852.0 1166.3L851.0 1166.5L850.0 1166.6L849.0 1166.8L848.0 1166.9L847.0 1167.1L846.0 1167.2L845.0 1167.4L844.0 1167.5L843.0 1167.7L842.0 1167.8L841.0 1168.6L840.0 1169.4L839.0 1170.2L838.0 1171.0L837.0 1171.8L836.0 1172.6L835.0 1173.4L834.0 1174.2L833.0 1175.0L832.0 1175.8L831.0 1176.6L830.0 1177.3L829.0 1178.1L828.0 1178.8L827.0 1178.8L826.0 1178.8L825.0 1178.8L824.0 1178.8L823.0 1178.8L822.0 1178.8L821.0 1178.8L820.0 1178.8L819.0 1178.8L818.0 1178.8L817.0 1178.8L816.0 1178.8L815.0 1178.8L814.0 1178.8L813.0 1178.8L812.0 1178.8L811.0 1178.8L810.0 1178.8L809.0 1178.8L808.0 1178.8L807.0 1178.8L806.0 1178.8L805.0 1178.8L804.0 1178.8L803.0 1178.8L802.0 1178.8L801.0 1178.8L800.0 1178.8L799.0 1178.8L798.0 1178.8L797.0 1178.8L796.0 1178.8L795.0 1178.8L794.0 1178.8L793.0 1178.8L792.0 1178.8L791.0 1178.8L790.0 1178.8L789.0 1178.8L788.0 1178.8L787.0 1178.8L786.0 1178.8L785.0 1178.8L784.0 1178.8L783.0 1178.8L782.0 1178.8L781.0 1178.8L780.0 1178.8L779.0 1178.8L778.0 1178.8L777.0 1178.0L776.0 1177.2L775.0 1176.3L774.0 1175.5L773.0 1174.7L772.0 1173.8L771.0 1173.2L770.0 1172.6L769.0 1172.0L768.0 1171.4L767.0 1170.8L766.0 1170.2L765.0 1169.6L764.0 1169.0L763.0 1168.4L762.0 1167.8L761.0 1167.8L760.0 1167.8L759.0 1167.8L758.0 1167.8L757.0 1167.8L756.0 1167.8L755.0 1167.8L754.0 1167.8L753.0 1167.8L752.0 1167.8L751.0 1167.8L750.0 1167.8L749.0 1167.8L748.0 1167.8L747.0 1168.2L746.0 1168.5L745.0 1168.8L744.0 1169.2L743.0 1169.5L742.0 1169.8L741.0 1170.2L740.0 1170.5L739.0 1170.8L738.0 1171.2L737.0 1171.5L736.0 1171.8L735.0 1172.7L734.0 1173.6L733.0 1174.4L732.0 1175.3L731.0 1176.1L730.0 1177.0L729.0 1177.8L728.0 1178.8L727.0 1179.8L726.0 1180.8L725.0 1181.8L724.0 1181.8L723.0 1181.8L722.0 1181.8L721.0 1181.8L720.0 1181.8L719.0 1181.8L718.0 1181.8L717.0 1181.8L716.0 1181.8L715.0 1181.8L714.0 1181.8L713.0 1181.8L712.0 1181.8L711.0 1181.8L710.0 1181.8L709.0 1181.8L708.0 1181.8L707.0 1181.8L706.0 1181.8L705.0 1181.8L704.0 1181.8L703.0 1181.8L702.0 1181.8L701.0 1181.8L700.0 1181.8L699.0 1181.8L698.0 1181.8L697.0 1181.8L696.0 1181.8L695.0 1181.8L694.0 1181.8L693.0 1181.8L692.0 1181.8L691.0 1181.8L690.0 1181.8L689.0 1181.8L688.0 1181.8L687.0 1181.8L686.0 1181.8L685.0 1181.8L684.0 1181.8L683.0 1181.8L682.0 1181.8L681.0 1181.8L680.0 1181.8L679.0 1181.8L678.0 1181.8L677.0 1181.8L676.0 1181.8L675.0 1181.8L674.0 1181.8L673.0 1180.8L672.0 1179.8L671.0 1176.3L670.0 1172.8L669.0 1169.3L668.0 1165.8L667.0 1165.2L666.0 1164.6L665.0 1164.0L664.0 1163.3L663.0 1162.7L662.0 1162.1L661.0 1161.5L660.0 1160.8L659.0 1160.8L658.0 1160.8L657.0 1160.8L656.0 1160.8L655.0 1160.8L654.0 1160.8L653.0 1160.8L652.0 1160.8L651.0 1160.8L650.0 1160.8L649.0 1160.8L648.0 1160.8L647.0 1161.1L646.0 1161.4L645.0 1161.7L644.0 1162.0L643.0 1162.2L642.0 1162.5L641.0 1162.8L640.0 1163.1L639.0 1163.3L638.0 1163.6L637.0 1163.9L636.0 1164.2L635.0 1164.5L634.0 1164.7L633.0 1165.0L632.0 1165.3L631.0 1165.6L630.0 1165.8L629.0 1169.6L628.0 1173.3L627.0 1177.1L626.0 1180.8L625.0 1184.6L624.0 1188.3L623.0 1192.1L622.0 1195.8L621.0 1198.8L620.0 1201.8L619.0 1201.8L618.0 1201.8L617.0 1201.8L616.0 1201.8L615.0 1201.8L614.0 1201.8L613.0 1201.8L612.0 1201.8L611.0 1201.8L610.0 1201.8L609.0 1201.8L608.0 1201.8L607.0 1201.8L606.0 1201.8L605.0 1201.8L604.0 1201.8L603.0 1201.8L602.0 1201.8L601.0 1201.8L600.0 1201.8L599.0 1201.8L598.0 1201.8L597.0 1201.8L596.0 1201.8L595.0 1201.8L594.0 1201.8L593.0 1201.8L592.0 1201.8L591.0 1201.8L590.0 1201.8L589.0 1201.8L588.0 1201.8L587.0 1201.8L586.0 1201.8L585.0 1201.8L584.0 1201.8L583.0 1201.8L582.0 1201.8L581.0 1201.8L580.0 1201.8L579.0 1201.8L578.0 1201.8L577.0 1189.8L576.0 1177.8L575.0 1177.8L574.0 1177.8L573.0 1177.8L572.0 1177.8L571.0 1177.8L570.0 1177.8L569.0 1177.8L568.0 1177.5L567.0 1177.2L566.0 1176.8L565.0 1176.5L564.0 1176.2L563.0 1175.8L562.0 1175.2L561.0 1174.6L560.0 1174.0L559.0 1173.3L558.0 1172.7L557.0 1172.1L556.0 1171.5L555.0 1170.8L554.0 1170.6L553.0 1170.4L552.0 1170.2L551.0 1170.0L550.0 1169.8L549.0 1169.6L548.0 1169.4L547.0 1169.2L546.0 1169.0L545.0 1168.8L544.0 1168.6L543.0 1168.4L542.0 1168.2L541.0 1168.0L540.0 1167.8L539.0 1168.0L538.0 1168.2L537.0 1168.4L536.0 1168.6L535.0 1168.8L534.0 1169.0L533.0 1169.2L532.0 1169.4L531.0 1169.6L530.0 1169.8L529.0 1170.0L528.0 1170.2L527.0 1170.4L526.0 1170.6L525.0 1170.8L524.0 1171.5L523.0 1172.1L522.0 1172.7L521.0 1173.3L520.0 1174.0L519.0 1174.6L518.0 1175.2L517.0 1175.8L516.0 1176.5L515.0 1177.2L514.0 1177.8L513.0 1177.8L512.0 1177.8L511.0 1177.8L510.0 1177.8L509.0 1177.8L508.0 1177.8L507.0 1177.8L506.0 1177.8L505.0 1177.8L504.0 1177.8L503.0 1177.8L502.0 1177.8L501.0 1177.8L500.0 1177.8L499.0 1177.8L498.0 1177.8L497.0 1177.8L496.0 1177.8L495.0 1177.8L494.0 1177.8L493.0 1177.8L492.0 1177.8L491.0 1177.8L490.0 1177.8L489.0 1177.8L488.0 1177.8L487.0 1177.8L486.0 1177.8L485.0 1177.8L484.0 1177.8L483.0 1177.8L482.0 1177.8L481.0 1177.8L480.0 1177.8L479.0 1177.8L478.0 1177.8L477.0 1177.8L476.0 1177.8L475.0 1177.8L474.0 1177.8L473.0 1177.8L472.0 1177.8L471.0 1177.8L470.0 1177.8L469.0 1177.8L468.0 1177.8L467.0 1177.8L466.0 1177.8L465.0 1177.8L464.0 1177.8L463.0 1177.8L462.0 1177.2L461.0 1176.5L460.0 1175.8L459.0 1175.2L458.0 1174.6L457.0 1174.0L456.0 1173.3L455.0 1172.7L454.0 1172.1L453.0 1171.5L452.0 1170.8L451.0 1170.4L450.0 1170.0L449.0 1169.6L448.0 1169.2L447.0 1168.8L446.0 1168.3L445.0 1167.9L444.0 1167.5L443.0 1167.1L442.0 1166.7L441.0 1166.3L440.0 1165.8L439.0 1165.3L438.0 1164.8L437.0 1164.3L436.0 1163.8L435.0 1163.3L434.0 1162.8L433.0 1162.3L432.0 1161.8L431.0 1162.6L430.0 1163.3L429.0 1164.1L428.0 1164.8L427.0 1165.6L426.0 1166.3L425.0 1167.1L424.0 1167.8L423.0 1168.6L422.0 1169.3L421.0 1170.1L420.0 1170.8L419.0 1171.6L418.0 1172.3L417.0 1173.0L416.0 1173.7L415.0 1174.4L414.0 1175.1L413.0 1175.8L412.0 1176.3L411.0 1176.8L410.0 1177.3L409.0 1177.8L408.0 1177.8L407.0 1177.8L406.0 1177.8L405.0 1177.8L404.0 1177.8L403.0 1177.8L402.0 1177.8L401.0 1177.8L400.0 1177.8L399.0 1177.8L398.0 1177.8L397.0 1177.8L396.0 1177.8L395.0 1177.8L394.0 1177.8L393.0 1177.8L392.0 1177.8L391.0 1177.8L390.0 1177.8L389.0 1177.8L388.0 1177.8L387.0 1177.8L386.0 1177.8L385.0 1177.8L384.0 1177.8L383.0 1177.8L382.0 1177.8L381.0 1177.8L380.0 1177.8L379.0 1177.8L378.0 1177.8L377.0 1177.8L376.0 1177.8L375.0 1177.8L374.0 1177.8L373.0 1177.8L372.0 1177.8L371.0 1177.8L370.0 1177.8L369.0 1177.8L368.0 1177.8L367.0 1177.8L366.0 1177.8L365.0 1177.8L364.0 1177.8L363.0 1177.8L362.0 1177.8L361.0 1177.8L360.0 1176.8L359.0 1175.8L358.0 1174.8L357.0 1173.8L356.0 1173.0L355.0 1172.1L354.0 1171.3L353.0 1170.4L352.0 1169.6L351.0 1168.7L350.0 1167.8L349.0 1167.7L348.0 1167.5L347.0 1167.3L346.0 1167.2L345.0 1167.0L344.0 1166.8L343.0 1166.7L342.0 1166.5L341.0 1166.3L340.0 1166.2L339.0 1166.0L338.0 1165.8L337.0 1166.0L336.0 1166.2L335.0 1166.3L334.0 1166.5L333.0 1166.7L332.0 1166.8L331.0 1167.0L330.0 1167.2L329.0 1167.3L328.0 1167.5L327.0 1167.7L326.0 1167.8L325.0 1168.2L324.0 1168.6L323.0 1169.0L322.0 1169.4L321.0 1169.8L320.0 1170.2L319.0 1170.6L318.0 1171.0L317.0 1171.4L316.0 1171.8L315.0 1172.1L314.0 1172.3L313.0 1172.6L312.0 1172.8L311.0 1173.1L310.0 1173.3L309.0 1173.6L308.0 1173.8L307.0 1175.8L306.0 1177.8L305.0 1177.9L304.0 1178.0L303.0 1178.0L302.0 1178.1L301.0 1178.1L300.0 1178.2L299.0 1178.2L298.0 1178.3L297.0 1178.4L296.0 1178.4L295.0 1178.5L294.0 1178.5L293.0 1178.6L292.0 1178.6L291.0 1178.7L290.0 1178.8L289.0 1178.8L288.0 1178.9L287.0 1178.9L286.0 1179.0L285.0 1179.0L284.0 1179.1L283.0 1179.2L282.0 1179.2L281.0 1179.3L280.0 1179.3L279.0 1179.4L278.0 1179.4L277.0 1179.5L276.0 1179.6L275.0 1179.6L274.0 1179.7L273.0 1179.7L272.0 1179.8L271.0 1179.8L270.0 1179.9L269.0 1180.0L268.0 1180.0L267.0 1180.1L266.0 1180.1L265.0 1180.2L264.0 1180.2L263.0 1180.3L262.0 1180.4L261.0 1180.4L260.0 1180.5L259.0 1180.5L258.0 1180.6L257.0 1180.6L256.0 1180.7L255.0 1180.8L254.0 1180.8L253.0 1207.8L252.0 1261.8L251.0 1261.8L250.0 1261.8L249.0 1261.8L248.0 1261.8L247.0 1261.8L246.0 1261.8L245.0 1261.8L244.0 1261.8L243.0 1262.1L242.0 1262.3L241.0 1262.6L240.0 1262.8L239.0 1263.1L238.0 1263.3L237.0 1263.6L236.0 1263.8L235.0 1264.0L234.0 1264.2L233.0 1264.4L232.0 1264.6L231.0 1264.8L230.0 1265.0L229.0 1265.2L228.0 1265.4L227.0 1265.6L226.0 1265.8L225.0 1266.8L224.0 1267.8L223.0 1268.8L222.0 1269.8L221.0 1270.8L220.0 1271.8L219.0 1272.8L218.0 1273.8L217.0 1274.7L216.0 1275.6L215.0 1276.5L214.0 1277.3L213.0 1278.2L212.0 1279.1L211.0 1280.0L210.0 1280.8L209.0 1281.7L208.0 1282.6L207.0 1283.5L206.0 1284.3L205.0 1285.2L204.0 1286.1L203.0 1287.0L202.0 1287.8L201.0 1289.8L200.0 1291.8L199.0 1293.8L198.0 1295.8L197.0 1297.8L196.0 1299.8L195.0 1299.7L194.0 1299.6L193.0 1299.5L192.0 1299.3L191.0 1299.2L190.0 1299.1L189.0 1299.0L188.0 1298.8L187.0 1298.7L186.0 1298.6L185.0 1298.5L184.0 1298.3L183.0 1298.2L182.0 1298.1L181.0 1298.0L180.0 1297.8L179.0 1297.6L178.0 1297.3L177.0 1297.0L176.0 1296.7L175.0 1296.4L174.0 1296.1L173.0 1295.8L172.0 1295.6L171.0 1295.3L170.0 1295.0L169.0 1294.7L168.0 1294.4L167.0 1294.1L166.0 1293.8L165.0 1292.8L164.0 1291.8L163.0 1290.8L162.0 1289.8L161.0 1288.8L160.0 1287.8L159.0 1286.8L158.0 1285.8L157.0 1282.8L156.0 1279.8L155.0 1276.8L154.0 1273.8L153.0 1270.8L152.0 1267.8ZM330.1 1163.3L329.9 1163.3L328.9 1300.0L331.1 1300.0ZM534.1 1164.0L545.9 1164.0L544.9 1337.0L535.1 1337.0ZM751.6 1164.0L756.4 1164.0L755.4 1372.0L752.6 1372.0ZM852.4 1162.1L856.2 1162.1L855.2 1258.0L853.4 1258.0Z" fill="#b4a76c"/><path d="M152.0 1242.2L152.9 1258.2L153.8 1244.2L154.7 1245.1L155.6 1248.8L156.5 1248.9L157.4 1262.9L158.3 1249.9L159.2 1250.7L160.1 1252.9L161.0 1286.2L161.9 1254.9L162.8 1274.4L163.7 1270.9L164.6 1291.0L165.5 1258.1L166.4 1291.2L167.3 1292.1L168.2 1267.4L169.1 1283.1L170.0 1274.2L170.9 1292.2L171.8 1259.9L172.7 1294.3L173.6 1293.5L174.5 1288.8L175.4 1294.2L176.3 1263.0L177.2 1262.4L178.1 1296.2L179.0 1265.4L179.9 1294.8L180.8 1292.4L181.7 1265.1L182.6 1296.6L183.5 1262.1L184.4 1295.5L185.3 1261.9L186.2 1294.7L187.1 1295.1L188.0 1267.3L188.9 1263.3L189.8 1297.4L190.7 1263.5L191.6 1296.3L192.5 1264.3L193.4 1264.5L194.3 1264.8L195.2 1265.5L196.1 1263.7L197.0 1268.6L197.9 1293.7L198.8 1262.3L199.7 1274.3L200.6 1278.3L201.5 1284.9L202.4 1260.2L203.3 1283.3L204.2 1252.7L205.1 1283.7L206.0 1282.9L206.9 1248.6L207.8 1245.1L208.7 1245.1L209.6 1279.5L210.5 1253.3L211.4 1278.2L212.3 1270.6L213.2 1257.6L214.1 1237.6L215.0 1238.0L215.9 1272.5L216.8 1236.4L217.7 1236.1L218.6 1233.8L219.5 1250.3L220.4 1269.6L221.3 1268.8L222.2 1265.9L223.1 1218.9L224.0 1265.5L224.9 1221.5L225.8 1212.7L226.7 1264.0L227.6 1212.1L228.5 1263.0L229.4 1263.1L230.3 1208.1L231.2 1208.8L232.1 1207.5L233.0 1207.0L233.9 1230.3L234.8 1214.3L235.7 1207.1L236.6 1262.1L237.5 1210.8L238.4 1211.5L239.3 1261.0L240.2 1214.9L241.1 1260.7L242.0 1259.7L242.9 1219.6L243.8 1220.6L244.7 1260.2L245.6 1258.3L246.5 1258.1L247.4 1236.1L248.3 1226.1L249.2 1260.8L250.1 1260.6L251.0 1228.9L251.9 1260.7L252.8 1216.7L253.7 1166.2L254.6 1179.7L255.5 1166.0L256.4 1167.2L257.3 1165.2L258.2 1165.3L259.1 1177.3L260.0 1177.3L260.9 1165.6L261.8 1175.5L262.7 1165.3L263.6 1177.7L264.5 1167.6L265.4 1178.0L266.3 1173.7L267.2 1165.4L268.1 1172.3L269.0 1166.2L269.9 1167.1L270.8 1175.9L271.7 1164.7L272.6 1166.3L273.5 1174.3L274.4 1178.6L275.3 1178.3L276.2 1177.0L277.1 1175.5L278.0 1175.6L278.9 1176.8L279.8 1165.4L280.7 1177.8L281.6 1164.5L282.5 1177.4L283.4 1177.4L284.3 1177.1L285.2 1177.6L286.1 1166.2L287.0 1175.2L287.9 1164.1L288.8 1164.9L289.7 1173.0L290.6 1167.5L291.5 1175.3L292.4 1172.5L293.3 1164.4L294.2 1175.6L295.1 1165.1L296.0 1167.7L296.9 1165.8L297.8 1164.4L298.7 1177.0L299.6 1175.8L300.5 1164.7L301.4 1176.8L302.3 1176.4L303.2 1174.7L304.1 1176.7L305.0 1163.6L305.9 1168.4L306.8 1149.3L307.7 1172.1L308.6 1126.9L309.5 1123.1L310.4 1118.4L311.3 1169.8L312.2 1112.3L313.1 1168.8L314.0 1169.4L314.9 1108.4L315.8 1119.1L316.7 1168.9L317.6 1168.2L318.5 1168.2L319.4 1168.5L320.3 1097.3L321.2 1095.4L322.1 1166.2L323.0 1147.9L323.9 1090.1L324.8 1166.6L325.7 1087.9L326.6 1092.1L327.5 1104.9L328.4 1166.2L329.3 1090.7L330.2 1093.0L331.1 1164.4L332.0 1164.7L332.9 1093.1L333.8 1093.5L334.7 1163.0L335.6 1107.6L336.5 1164.5L337.4 1163.7L338.3 1095.6L339.2 1162.8L340.1 1098.0L341.0 1163.2L341.9 1138.4L342.8 1102.0L343.7 1162.9L344.6 1103.1L345.5 1153.3L346.4 1103.1L347.3 1125.9L348.2 1103.9L349.1 1134.4L350.0 1106.2L350.9 1167.3L351.8 1114.6L352.7 1151.4L353.6 1167.6L354.5 1139.7L355.4 1125.3L356.3 1169.5L357.2 1141.9L358.1 1139.7L359.0 1173.4L359.9 1156.1L360.8 1160.8L361.7 1175.7L362.6 1164.0L363.5 1162.6L364.4 1175.8L365.3 1162.4L366.2 1167.7L367.1 1173.8L368.0 1173.8L368.9 1164.0L369.8 1176.6L370.7 1166.9L371.6 1175.6L372.5 1164.4L373.4 1163.8L374.3 1163.7L375.2 1176.6L376.1 1167.8L377.0 1163.0L377.9 1165.3L378.8 1174.3L379.7 1163.5L380.6 1165.3L381.5 1171.4L382.4 1165.2L383.3 1174.0L384.2 1163.1L385.1 1162.8L386.0 1175.8L386.9 1174.9L387.8 1176.1L388.7 1163.1L389.6 1169.1L390.5 1175.4L391.4 1176.6L392.3 1163.1L393.2 1176.4L394.1 1163.6L395.0 1165.6L395.9 1165.5L396.8 1163.5L397.7 1174.6L398.6 1167.5L399.5 1165.0L400.4 1171.2L401.3 1164.6L402.2 1174.9L403.1 1165.8L404.0 1176.7L404.9 1164.8L405.8 1174.8L406.7 1176.7L407.6 1163.6L408.5 1163.8L409.4 1176.3L410.3 1170.3L411.2 1175.3L412.1 1174.2L413.0 1135.9L413.9 1154.2L414.8 1130.2L415.7 1127.8L416.6 1126.7L417.5 1171.2L418.4 1118.8L419.3 1148.1L420.2 1114.3L421.1 1112.4L422.0 1112.1L422.9 1109.9L423.8 1146.2L424.7 1163.8L425.6 1165.3L426.5 1162.8L427.4 1162.9L428.3 1119.2L429.2 1147.8L430.1 1104.6L431.0 1148.6L431.9 1102.2L432.8 1101.1L433.7 1161.0L434.6 1160.9L435.5 1145.2L436.4 1134.0L437.3 1133.3L438.2 1161.2L439.1 1115.3L440.0 1115.3L440.9 1116.1L441.8 1115.3L442.7 1165.7L443.6 1142.2L444.5 1164.1L445.4 1114.6L446.3 1117.0L447.2 1116.5L448.1 1165.8L449.0 1167.3L449.9 1168.8L450.8 1167.5L451.7 1169.6L452.6 1116.8L453.5 1119.9L454.4 1143.1L455.3 1124.9L456.2 1128.4L457.1 1171.2L458.0 1134.2L458.9 1142.7L459.8 1174.4L460.7 1173.4L461.6 1173.2L462.5 1176.4L463.4 1164.7L464.3 1170.0L465.2 1174.9L466.1 1168.8L467.0 1176.3L467.9 1169.0L468.8 1166.7L469.7 1164.8L470.6 1164.5L471.5 1176.4L472.4 1165.4L473.3 1173.8L474.2 1163.3L475.1 1163.3L476.0 1172.4L476.9 1175.9L477.8 1175.6L478.7 1164.6L479.6 1175.1L480.5 1172.2L481.4 1166.3L482.3 1173.7L483.2 1176.3L484.1 1168.4L485.0 1174.2L485.9 1165.0L486.8 1162.8L487.7 1170.8L488.6 1175.4L489.5 1164.3L490.4 1165.7L491.3 1175.0L492.2 1175.6L493.1 1172.2L494.0 1173.2L494.9 1173.8L495.8 1173.7L496.7 1163.4L497.6 1174.9L498.5 1164.3L499.4 1165.3L500.3 1175.7L501.2 1175.4L502.1 1174.8L503.0 1174.9L503.9 1163.5L504.8 1165.5L505.7 1171.1L506.6 1173.9L507.5 1164.9L508.4 1175.8L509.3 1175.3L510.2 1175.5L511.1 1165.8L512.0 1174.6L512.9 1165.8L513.8 1175.4L514.7 1175.9L515.6 1146.1L516.5 1157.9L517.4 1148.4L518.3 1126.4L519.2 1173.3L520.1 1122.9L521.0 1170.1L521.9 1134.3L522.8 1168.4L523.7 1169.0L524.6 1168.6L525.5 1168.7L526.4 1168.5L527.3 1105.3L528.2 1130.9L529.1 1104.8L530.0 1107.0L530.9 1143.7L531.8 1148.5L532.7 1144.8L533.6 1106.3L534.5 1105.2L535.4 1154.1L536.3 1105.8L537.2 1104.5L538.1 1165.6L539.0 1105.1L539.9 1166.4L540.8 1106.2L541.7 1160.5L542.6 1103.6L543.5 1106.6L544.4 1104.2L545.3 1165.6L546.2 1158.8L547.1 1167.3L548.0 1105.6L548.9 1105.3L549.8 1166.9L550.7 1168.4L551.6 1165.8L552.5 1106.2L553.4 1167.5L554.3 1167.3L555.2 1108.2L556.1 1158.2L557.0 1112.4L557.9 1116.1L558.8 1118.2L559.7 1171.9L560.6 1123.5L561.5 1168.6L562.4 1165.1L563.3 1133.9L564.2 1151.3L565.1 1162.1L566.0 1173.6L566.9 1153.3L567.8 1175.3L568.7 1174.9L569.6 1163.2L570.5 1176.3L571.4 1164.3L572.3 1163.4L573.2 1175.4L574.1 1164.7L575.0 1175.0L575.9 1175.1L576.8 1183.4L577.7 1188.2L578.6 1192.2L579.5 1190.9L580.4 1199.9L581.3 1195.8L582.2 1189.6L583.1 1200.4L584.0 1200.7L584.9 1189.5L585.8 1199.3L586.7 1189.6L587.6 1196.2L588.5 1189.8L589.4 1190.6L590.3 1192.2L591.2 1191.9L592.1 1192.3L593.0 1197.9L593.9 1198.9L594.8 1200.1L595.7 1190.3L596.6 1191.0L597.5 1199.6L598.4 1199.9L599.3 1191.2L600.2 1196.7L601.1 1192.5L602.0 1200.2L602.9 1198.0L603.8 1200.3L604.7 1194.7L605.6 1189.9L606.5 1199.7L607.4 1190.6L608.3 1191.8L609.2 1200.5L610.1 1191.4L611.0 1192.1L611.9 1195.6L612.8 1199.2L613.7 1192.6L614.6 1191.5L615.5 1200.2L616.4 1190.2L617.3 1191.2L618.2 1198.7L619.1 1192.5L620.0 1200.5L620.9 1162.5L621.8 1132.4L622.7 1122.4L623.6 1186.0L624.5 1155.3L625.4 1111.0L626.3 1178.5L627.2 1104.2L628.1 1099.7L629.0 1095.0L629.9 1138.0L630.8 1162.1L631.7 1164.2L632.6 1121.8L633.5 1150.0L634.4 1162.0L635.3 1162.1L636.2 1088.1L637.1 1162.8L638.0 1089.4L638.9 1106.8L639.8 1088.3L640.7 1161.1L641.6 1161.5L642.5 1130.5L643.4 1087.7L644.3 1159.3L645.2 1140.4L646.1 1130.5L647.0 1158.9L647.9 1158.2L648.8 1086.1L649.7 1085.7L650.6 1159.3L651.5 1086.9L652.4 1086.7L653.3 1134.6L654.2 1088.0L655.1 1088.9L656.0 1089.1L656.9 1147.0L657.8 1157.2L658.7 1133.9L659.6 1090.3L660.5 1157.6L661.4 1114.3L662.3 1160.1L663.2 1124.5L664.1 1125.6L665.0 1114.6L665.9 1161.1L666.8 1163.8L667.7 1162.8L668.6 1131.8L669.5 1169.3L670.4 1170.9L671.3 1174.8L672.2 1178.9L673.1 1169.1L674.0 1176.0L674.9 1180.2L675.8 1178.9L676.7 1178.6L677.6 1178.4L678.5 1178.8L679.4 1177.8L680.3 1169.1L681.2 1169.7L682.1 1175.0L683.0 1169.1L683.9 1178.7L684.8 1168.4L685.7 1179.3L686.6 1169.8L687.5 1168.9L688.4 1168.8L689.3 1178.4L690.2 1176.0L691.1 1179.8L692.0 1175.8L692.9 1167.4L693.8 1167.4L694.7 1168.5L695.6 1167.7L696.5 1171.3L697.4 1168.0L698.3 1167.9L699.2 1168.4L700.1 1180.1L701.0 1180.8L701.9 1180.5L702.8 1178.8L703.7 1169.7L704.6 1179.8L705.5 1169.3L706.4 1167.6L707.3 1168.9L708.2 1179.7L709.1 1179.1L710.0 1168.7L710.9 1177.8L711.8 1170.5L712.7 1177.4L713.6 1179.2L714.5 1167.3L715.4 1168.4L716.3 1168.7L717.2 1169.9L718.1 1167.4L719.0 1179.6L719.9 1169.5L720.8 1172.2L721.7 1167.5L722.6 1180.1L723.5 1180.5L724.4 1169.9L725.3 1178.7L726.2 1169.8L727.1 1174.2L728.0 1175.2L728.9 1136.0L729.8 1169.8L730.7 1131.9L731.6 1170.5L732.5 1161.1L733.4 1172.4L734.3 1168.5L735.2 1162.5L736.1 1170.6L737.0 1167.9L737.9 1153.0L738.8 1168.1L739.7 1112.1L740.6 1168.0L741.5 1166.9L742.4 1167.9L743.3 1109.9L744.2 1167.6L745.1 1110.5L746.0 1167.0L746.9 1166.8L747.8 1166.7L748.7 1107.9L749.6 1165.5L750.5 1166.6L751.4 1165.6L752.3 1164.9L753.2 1108.9L754.1 1163.0L755.0 1113.2L755.9 1164.5L756.8 1139.4L757.7 1157.0L758.6 1165.7L759.5 1165.7L760.4 1112.4L761.3 1156.6L762.2 1166.8L763.1 1128.9L764.0 1116.1L764.9 1117.3L765.8 1167.6L766.7 1162.4L767.6 1153.7L768.5 1125.3L769.4 1127.0L770.3 1163.0L771.2 1171.7L772.1 1153.3L773.0 1172.2L773.9 1172.0L774.8 1174.2L775.7 1173.9L776.6 1156.3L777.5 1161.1L778.4 1176.1L779.3 1163.8L780.2 1165.4L781.1 1162.6L782.0 1162.8L782.9 1164.0L783.8 1175.1L784.7 1164.4L785.6 1164.0L786.5 1174.9L787.4 1164.9L788.3 1164.5L789.2 1162.6L790.1 1164.5L791.0 1176.1L791.9 1164.2L792.8 1177.3L793.7 1175.6L794.6 1176.7L795.5 1164.7L796.4 1163.6L797.3 1165.4L798.2 1177.7L799.1 1177.7L800.0 1167.0L800.9 1175.3L801.8 1175.7L802.7 1165.0L803.6 1164.2L804.5 1175.3L805.4 1174.9L806.3 1163.9L807.2 1163.9L808.1 1177.7L809.0 1176.8L809.9 1163.8L810.8 1162.9L811.7 1175.6L812.6 1166.8L813.5 1165.0L814.4 1163.0L815.3 1175.9L816.2 1165.3L817.1 1174.3L818.0 1166.6L818.9 1173.4L819.8 1174.8L820.7 1165.7L821.6 1177.8L822.5 1164.3L823.4 1177.4L824.3 1176.1L825.2 1176.7L826.1 1176.1L827.0 1166.1L827.9 1176.8L828.8 1159.2L829.7 1153.4L830.6 1147.7L831.5 1173.8L832.4 1167.1L833.3 1140.3L834.2 1132.7L835.1 1161.5L836.0 1128.7L836.9 1127.5L837.8 1167.8L838.7 1168.0L839.6 1122.7L840.5 1120.3L841.4 1116.9L842.3 1133.1L843.2 1149.3L844.1 1147.4L845.0 1149.0L845.9 1163.3L846.8 1164.5L847.7 1164.5L848.6 1119.7L849.5 1125.4L850.4 1128.6L851.3 1128.8L852.2 1162.9L853.1 1164.4L854.0 1162.2L854.9 1124.5L855.8 1164.9L856.7 1164.1L857.6 1162.8L858.5 1120.0L859.4 1164.9L860.3 1118.9L861.2 1163.6L862.1 1117.7L863.0 1114.7L863.9 1113.6L864.8 1123.2L865.7 1111.6L866.6 1163.6L867.5 1113.3L868.4 1167.3L869.3 1117.1L870.2 1167.4L871.1 1123.0L872.0 1122.8L872.9 1125.5L873.8 1128.0L874.7 1130.2L875.6 1139.1L876.5 1133.3L877.4 1139.3L878.3 1143.5L879.2 1174.6L880.1 1152.9L881.0 1158.1L881.9 1177.6L882.8 1177.5L883.7 1176.6L884.6 1177.3L885.5 1164.7L886.4 1166.2L887.3 1175.1L888.2 1174.5L889.1 1167.4L890.0 1169.4L890.9 1175.5L891.8 1168.2L892.7 1164.8L893.6 1171.8L894.5 1174.7L895.4 1176.0L896.3 1171.5L897.2 1176.7L898.1 1177.2L899.0 1177.3L899.9 1175.6L900.8 1177.7L901.7 1163.0L902.6 1175.8L903.5 1177.5L904.4 1164.7L905.3 1177.4L906.2 1172.1L907.1 1163.7L908.0 1177.0L908.9 1164.9L909.8 1176.5L910.7 1177.2L911.6 1176.7L912.5 1177.7L913.4 1164.1L914.3 1164.0L915.2 1165.8L916.1 1176.8L917.0 1170.3L917.9 1177.7L918.8 1175.7L919.7 1163.5L920.6 1172.9L921.5 1176.2L922.4 1164.7L923.3 1163.3L924.2 1174.2L925.1 1175.3L926.0 1177.6L926.9 1165.6L927.8 1168.0L928.7 1171.0L929.6 1176.9L930.5 1164.8L931.4 1177.1L932.3 1163.2L933.2 1175.4L934.1 1174.8L935.0 1138.0L935.9 1132.8L936.8 1174.8L937.7 1163.1L938.6 1118.0L939.5 1139.3L940.4 1164.2L941.3 1153.5L942.2 1149.2L943.1 1107.2L944.0 1103.1L944.9 1101.8L945.8 1165.0L946.7 1103.4L947.6 1099.6L948.5 1147.5L949.4 1099.0L950.3 1165.6L951.2 1167.2L952.1 1166.8L953.0 1168.1L953.9 1097.1L954.8 1166.2L955.7 1097.6L956.6 1118.1L957.5 1169.4L958.4 1162.7L959.3 1098.4L960.2 1097.0L961.1 1169.4L962.0 1170.1L962.9 1130.6L963.8 1168.7L964.7 1171.1L965.6 1171.0L966.5 1169.4L967.4 1122.9L968.3 1101.5L969.2 1171.5L970.1 1101.1L971.0 1101.5L971.9 1101.0L972.8 1102.4L973.7 1135.7M212.4 1246.8L212.4 1210.2M228.8 1216.8L228.8 1137.2M238.9 1218.6L238.9 1192.2M246.8 1230.7L246.8 1192.2M314.0 1114.5L314.0 1074.2M326.0 1095.2L326.0 1042.2M346.5 1110.3L346.5 1059.2M439.6 1122.4L439.6 1045.2M451.5 1121.3L451.5 1081.2M528.0 1112.8L528.0 1027.2M558.6 1124.5L558.6 1067.2M628.5 1104.8L628.5 1061.2M641.7 1093.7L641.7 1070.2M648.3 1091.4L648.3 1043.7M658.9 1097.6L658.9 1045.2M735.5 1122.8L735.5 1074.2M760.7 1117.9L760.7 1053.2M842.4 1123.4L842.4 1027.2M846.0 1125.7L846.0 1065.2M849.0 1127.5L849.0 1086.2M864.0 1120.6L864.0 1050.2M867.5 1121.2L867.5 1039.7M870.0 1126.2L870.0 1065.2M943.0 1113.2L943.0 1051.2M957.4 1103.4L957.4 1070.2M964.0 1105.3L964.0 1065.2M328.5 1162.1L328.5 1309.8M331.5 1162.1L331.5 1300.0L332.0 1309.8M535.5 1162.8L535.5 1410.8M544.5 1162.8L544.5 1337.0L542.0 1410.8M751.2 1162.8L751.2 1370.8M756.8 1162.8L756.8 1372.0L756.0 1370.8M851.8 1160.9L851.8 1410.8M856.8 1160.9L856.8 1258.0L856.3 1410.8" fill="none" stroke="#b4a76c" stroke-width="2.6" stroke-linejoin="round"/><path d="M152.0 1242.2h0M152.9 1258.2h0M153.8 1244.2h0M154.7 1245.1h0M155.6 1248.8h0M156.5 1248.9h0M157.4 1262.9h0M158.3 1249.9h0M159.2 1250.7h0M160.1 1252.9h0M161.0 1286.2h0M161.9 1254.9h0M162.8 1274.4h0M163.7 1270.9h0M164.6 1291.0h0M165.5 1258.1h0M166.4 1291.2h0M167.3 1292.1h0M168.2 1267.4h0M169.1 1283.1h0M170.0 1274.2h0M170.9 1292.2h0M171.8 1259.9h0M172.7 1294.3h0M173.6 1293.5h0M174.5 1288.8h0M175.4 1294.2h0M176.3 1263.0h0M177.2 1262.4h0M178.1 1296.2h0M179.0 1265.4h0M179.9 1294.8h0M180.8 1292.4h0M181.7 1265.1h0M182.6 1296.6h0M183.5 1262.1h0M184.4 1295.5h0M185.3 1261.9h0M186.2 1294.7h0M187.1 1295.1h0M188.0 1267.3h0M188.9 1263.3h0M189.8 1297.4h0M190.7 1263.5h0M191.6 1296.3h0M192.5 1264.3h0M193.4 1264.5h0M194.3 1264.8h0M195.2 1265.5h0M196.1 1263.7h0M197.0 1268.6h0M197.9 1293.7h0M198.8 1262.3h0M199.7 1274.3h0M200.6 1278.3h0M201.5 1284.9h0M202.4 1260.2h0M203.3 1283.3h0M204.2 1252.7h0M205.1 1283.7h0M206.0 1282.9h0M206.9 1248.6h0M207.8 1245.1h0M208.7 1245.1h0M209.6 1279.5h0M210.5 1253.3h0M211.4 1278.2h0M212.3 1270.6h0M213.2 1257.6h0M214.1 1237.6h0M215.0 1238.0h0M215.9 1272.5h0M216.8 1236.4h0M217.7 1236.1h0M218.6 1233.8h0M219.5 1250.3h0M220.4 1269.6h0M221.3 1268.8h0M222.2 1265.9h0M223.1 1218.9h0M224.0 1265.5h0M224.9 1221.5h0M225.8 1212.7h0M226.7 1264.0h0M227.6 1212.1h0M228.5 1263.0h0M229.4 1263.1h0M230.3 1208.1h0M231.2 1208.8h0M232.1 1207.5h0M233.0 1207.0h0M233.9 1230.3h0M234.8 1214.3h0M235.7 1207.1h0M236.6 1262.1h0M237.5 1210.8h0M238.4 1211.5h0M239.3 1261.0h0M240.2 1214.9h0M241.1 1260.7h0M242.0 1259.7h0M242.9 1219.6h0M243.8 1220.6h0M244.7 1260.2h0M245.6 1258.3h0M246.5 1258.1h0M247.4 1236.1h0M248.3 1226.1h0M249.2 1260.8h0M250.1 1260.6h0M251.0 1228.9h0M251.9 1260.7h0M252.8 1216.7h0M253.7 1166.2h0M254.6 1179.7h0M255.5 1166.0h0M256.4 1167.2h0M257.3 1165.2h0M258.2 1165.3h0M259.1 1177.3h0M260.0 1177.3h0M260.9 1165.6h0M261.8 1175.5h0M262.7 1165.3h0M263.6 1177.7h0M264.5 1167.6h0M265.4 1178.0h0M266.3 1173.7h0M267.2 1165.4h0M268.1 1172.3h0M269.0 1166.2h0M269.9 1167.1h0M270.8 1175.9h0M271.7 1164.7h0M272.6 1166.3h0M273.5 1174.3h0M274.4 1178.6h0M275.3 1178.3h0M276.2 1177.0h0M277.1 1175.5h0M278.0 1175.6h0M278.9 1176.8h0M279.8 1165.4h0M280.7 1177.8h0M281.6 1164.5h0M282.5 1177.4h0M283.4 1177.4h0M284.3 1177.1h0M285.2 1177.6h0M286.1 1166.2h0M287.0 1175.2h0M287.9 1164.1h0M288.8 1164.9h0M289.7 1173.0h0M290.6 1167.5h0M291.5 1175.3h0M292.4 1172.5h0M293.3 1164.4h0M294.2 1175.6h0M295.1 1165.1h0M296.0 1167.7h0M296.9 1165.8h0M297.8 1164.4h0M298.7 1177.0h0M299.6 1175.8h0M300.5 1164.7h0M301.4 1176.8h0M302.3 1176.4h0M303.2 1174.7h0M304.1 1176.7h0M305.0 1163.6h0M305.9 1168.4h0M306.8 1149.3h0M307.7 1172.1h0M308.6 1126.9h0M309.5 1123.1h0M310.4 1118.4h0M311.3 1169.8h0M312.2 1112.3h0M313.1 1168.8h0M314.0 1169.4h0M314.9 1108.4h0M315.8 1119.1h0M316.7 1168.9h0M317.6 1168.2h0M318.5 1168.2h0M319.4 1168.5h0M320.3 1097.3h0M321.2 1095.4h0M322.1 1166.2h0M323.0 1147.9h0M323.9 1090.1h0M324.8 1166.6h0M325.7 1087.9h0M326.6 1092.1h0M327.5 1104.9h0M328.4 1166.2h0M329.3 1090.7h0M330.2 1093.0h0M331.1 1164.4h0M332.0 1164.7h0M332.9 1093.1h0M333.8 1093.5h0M334.7 1163.0h0M335.6 1107.6h0M336.5 1164.5h0M337.4 1163.7h0M338.3 1095.6h0M339.2 1162.8h0M340.1 1098.0h0M341.0 1163.2h0M341.9 1138.4h0M342.8 1102.0h0M343.7 1162.9h0M344.6 1103.1h0M345.5 1153.3h0M346.4 1103.1h0M347.3 1125.9h0M348.2 1103.9h0M349.1 1134.4h0M350.0 1106.2h0M350.9 1167.3h0M351.8 1114.6h0M352.7 1151.4h0M353.6 1167.6h0M354.5 1139.7h0M355.4 1125.3h0M356.3 1169.5h0M357.2 1141.9h0M358.1 1139.7h0M359.0 1173.4h0M359.9 1156.1h0M360.8 1160.8h0M361.7 1175.7h0M362.6 1164.0h0M363.5 1162.6h0M364.4 1175.8h0M365.3 1162.4h0M366.2 1167.7h0M367.1 1173.8h0M368.0 1173.8h0M368.9 1164.0h0M369.8 1176.6h0M370.7 1166.9h0M371.6 1175.6h0M372.5 1164.4h0M373.4 1163.8h0M374.3 1163.7h0M375.2 1176.6h0M376.1 1167.8h0M377.0 1163.0h0M377.9 1165.3h0M378.8 1174.3h0M379.7 1163.5h0M380.6 1165.3h0M381.5 1171.4h0M382.4 1165.2h0M383.3 1174.0h0M384.2 1163.1h0M385.1 1162.8h0M386.0 1175.8h0M386.9 1174.9h0M387.8 1176.1h0M388.7 1163.1h0M389.6 1169.1h0M390.5 1175.4h0M391.4 1176.6h0M392.3 1163.1h0M393.2 1176.4h0M394.1 1163.6h0M395.0 1165.6h0M395.9 1165.5h0M396.8 1163.5h0M397.7 1174.6h0M398.6 1167.5h0M399.5 1165.0h0M400.4 1171.2h0M401.3 1164.6h0M402.2 1174.9h0M403.1 1165.8h0M404.0 1176.7h0M404.9 1164.8h0M405.8 1174.8h0M406.7 1176.7h0M407.6 1163.6h0M408.5 1163.8h0M409.4 1176.3h0M410.3 1170.3h0M411.2 1175.3h0M412.1 1174.2h0M413.0 1135.9h0M413.9 1154.2h0M414.8 1130.2h0M415.7 1127.8h0M416.6 1126.7h0M417.5 1171.2h0M418.4 1118.8h0M419.3 1148.1h0M420.2 1114.3h0M421.1 1112.4h0M422.0 1112.1h0M422.9 1109.9h0M423.8 1146.2h0M424.7 1163.8h0M425.6 1165.3h0M426.5 1162.8h0M427.4 1162.9h0M428.3 1119.2h0M429.2 1147.8h0M430.1 1104.6h0M431.0 1148.6h0M431.9 1102.2h0M432.8 1101.1h0M433.7 1161.0h0M434.6 1160.9h0M435.5 1145.2h0M436.4 1134.0h0M437.3 1133.3h0M438.2 1161.2h0M439.1 1115.3h0M440.0 1115.3h0M440.9 1116.1h0M441.8 1115.3h0M442.7 1165.7h0M443.6 1142.2h0M444.5 1164.1h0M445.4 1114.6h0M446.3 1117.0h0M447.2 1116.5h0M448.1 1165.8h0M449.0 1167.3h0M449.9 1168.8h0M450.8 1167.5h0M451.7 1169.6h0M452.6 1116.8h0M453.5 1119.9h0M454.4 1143.1h0M455.3 1124.9h0M456.2 1128.4h0M457.1 1171.2h0M458.0 1134.2h0M458.9 1142.7h0M459.8 1174.4h0M460.7 1173.4h0M461.6 1173.2h0M462.5 1176.4h0M463.4 1164.7h0M464.3 1170.0h0M465.2 1174.9h0M466.1 1168.8h0M467.0 1176.3h0M467.9 1169.0h0M468.8 1166.7h0M469.7 1164.8h0M470.6 1164.5h0M471.5 1176.4h0M472.4 1165.4h0M473.3 1173.8h0M474.2 1163.3h0M475.1 1163.3h0M476.0 1172.4h0M476.9 1175.9h0M477.8 1175.6h0M478.7 1164.6h0M479.6 1175.1h0M480.5 1172.2h0M481.4 1166.3h0M482.3 1173.7h0M483.2 1176.3h0M484.1 1168.4h0M485.0 1174.2h0M485.9 1165.0h0M486.8 1162.8h0M487.7 1170.8h0M488.6 1175.4h0M489.5 1164.3h0M490.4 1165.7h0M491.3 1175.0h0M492.2 1175.6h0M493.1 1172.2h0M494.0 1173.2h0M494.9 1173.8h0M495.8 1173.7h0M496.7 1163.4h0M497.6 1174.9h0M498.5 1164.3h0M499.4 1165.3h0M500.3 1175.7h0M501.2 1175.4h0M502.1 1174.8h0M503.0 1174.9h0M503.9 1163.5h0M504.8 1165.5h0M505.7 1171.1h0M506.6 1173.9h0M507.5 1164.9h0M508.4 1175.8h0M509.3 1175.3h0M510.2 1175.5h0M511.1 1165.8h0M512.0 1174.6h0M512.9 1165.8h0M513.8 1175.4h0M514.7 1175.9h0M515.6 1146.1h0M516.5 1157.9h0M517.4 1148.4h0M518.3 1126.4h0M519.2 1173.3h0M520.1 1122.9h0M521.0 1170.1h0M521.9 1134.3h0M522.8 1168.4h0M523.7 1169.0h0M524.6 1168.6h0M525.5 1168.7h0M526.4 1168.5h0M527.3 1105.3h0M528.2 1130.9h0M529.1 1104.8h0M530.0 1107.0h0M530.9 1143.7h0M531.8 1148.5h0M532.7 1144.8h0M533.6 1106.3h0M534.5 1105.2h0M535.4 1154.1h0M536.3 1105.8h0M537.2 1104.5h0M538.1 1165.6h0M539.0 1105.1h0M539.9 1166.4h0M540.8 1106.2h0M541.7 1160.5h0M542.6 1103.6h0M543.5 1106.6h0M544.4 1104.2h0M545.3 1165.6h0M546.2 1158.8h0M547.1 1167.3h0M548.0 1105.6h0M548.9 1105.3h0M549.8 1166.9h0M550.7 1168.4h0M551.6 1165.8h0M552.5 1106.2h0M553.4 1167.5h0M554.3 1167.3h0M555.2 1108.2h0M556.1 1158.2h0M557.0 1112.4h0M557.9 1116.1h0M558.8 1118.2h0M559.7 1171.9h0M560.6 1123.5h0M561.5 1168.6h0M562.4 1165.1h0M563.3 1133.9h0M564.2 1151.3h0M565.1 1162.1h0M566.0 1173.6h0M566.9 1153.3h0M567.8 1175.3h0M568.7 1174.9h0M569.6 1163.2h0M570.5 1176.3h0M571.4 1164.3h0M572.3 1163.4h0M573.2 1175.4h0M574.1 1164.7h0M575.0 1175.0h0M575.9 1175.1h0M576.8 1183.4h0M577.7 1188.2h0M578.6 1192.2h0M579.5 1190.9h0M580.4 1199.9h0M581.3 1195.8h0M582.2 1189.6h0M583.1 1200.4h0M584.0 1200.7h0M584.9 1189.5h0M585.8 1199.3h0M586.7 1189.6h0M587.6 1196.2h0M588.5 1189.8h0M589.4 1190.6h0M590.3 1192.2h0M591.2 1191.9h0M592.1 1192.3h0M593.0 1197.9h0M593.9 1198.9h0M594.8 1200.1h0M595.7 1190.3h0M596.6 1191.0h0M597.5 1199.6h0M598.4 1199.9h0M599.3 1191.2h0M600.2 1196.7h0M601.1 1192.5h0M602.0 1200.2h0M602.9 1198.0h0M603.8 1200.3h0M604.7 1194.7h0M605.6 1189.9h0M606.5 1199.7h0M607.4 1190.6h0M608.3 1191.8h0M609.2 1200.5h0M610.1 1191.4h0M611.0 1192.1h0M611.9 1195.6h0M612.8 1199.2h0M613.7 1192.6h0M614.6 1191.5h0M615.5 1200.2h0M616.4 1190.2h0M617.3 1191.2h0M618.2 1198.7h0M619.1 1192.5h0M620.0 1200.5h0M620.9 1162.5h0M621.8 1132.4h0M622.7 1122.4h0M623.6 1186.0h0M624.5 1155.3h0M625.4 1111.0h0M626.3 1178.5h0M627.2 1104.2h0M628.1 1099.7h0M629.0 1095.0h0M629.9 1138.0h0M630.8 1162.1h0M631.7 1164.2h0M632.6 1121.8h0M633.5 1150.0h0M634.4 1162.0h0M635.3 1162.1h0M636.2 1088.1h0M637.1 1162.8h0M638.0 1089.4h0M638.9 1106.8h0M639.8 1088.3h0M640.7 1161.1h0M641.6 1161.5h0M642.5 1130.5h0M643.4 1087.7h0M644.3 1159.3h0M645.2 1140.4h0M646.1 1130.5h0M647.0 1158.9h0M647.9 1158.2h0M648.8 1086.1h0M649.7 1085.7h0M650.6 1159.3h0M651.5 1086.9h0M652.4 1086.7h0M653.3 1134.6h0M654.2 1088.0h0M655.1 1088.9h0M656.0 1089.1h0M656.9 1147.0h0M657.8 1157.2h0M658.7 1133.9h0M659.6 1090.3h0M660.5 1157.6h0M661.4 1114.3h0M662.3 1160.1h0M663.2 1124.5h0M664.1 1125.6h0M665.0 1114.6h0M665.9 1161.1h0M666.8 1163.8h0M667.7 1162.8h0M668.6 1131.8h0M669.5 1169.3h0M670.4 1170.9h0M671.3 1174.8h0M672.2 1178.9h0M673.1 1169.1h0M674.0 1176.0h0M674.9 1180.2h0M675.8 1178.9h0M676.7 1178.6h0M677.6 1178.4h0M678.5 1178.8h0M679.4 1177.8h0M680.3 1169.1h0M681.2 1169.7h0M682.1 1175.0h0M683.0 1169.1h0M683.9 1178.7h0M684.8 1168.4h0M685.7 1179.3h0M686.6 1169.8h0M687.5 1168.9h0M688.4 1168.8h0M689.3 1178.4h0M690.2 1176.0h0M691.1 1179.8h0M692.0 1175.8h0M692.9 1167.4h0M693.8 1167.4h0M694.7 1168.5h0M695.6 1167.7h0M696.5 1171.3h0M697.4 1168.0h0M698.3 1167.9h0M699.2 1168.4h0M700.1 1180.1h0M701.0 1180.8h0M701.9 1180.5h0M702.8 1178.8h0M703.7 1169.7h0M704.6 1179.8h0M705.5 1169.3h0M706.4 1167.6h0M707.3 1168.9h0M708.2 1179.7h0M709.1 1179.1h0M710.0 1168.7h0M710.9 1177.8h0M711.8 1170.5h0M712.7 1177.4h0M713.6 1179.2h0M714.5 1167.3h0M715.4 1168.4h0M716.3 1168.7h0M717.2 1169.9h0M718.1 1167.4h0M719.0 1179.6h0M719.9 1169.5h0M720.8 1172.2h0M721.7 1167.5h0M722.6 1180.1h0M723.5 1180.5h0M724.4 1169.9h0M725.3 1178.7h0M726.2 1169.8h0M727.1 1174.2h0M728.0 1175.2h0M728.9 1136.0h0M729.8 1169.8h0M730.7 1131.9h0M731.6 1170.5h0M732.5 1161.1h0M733.4 1172.4h0M734.3 1168.5h0M735.2 1162.5h0M736.1 1170.6h0M737.0 1167.9h0M737.9 1153.0h0M738.8 1168.1h0M739.7 1112.1h0M740.6 1168.0h0M741.5 1166.9h0M742.4 1167.9h0M743.3 1109.9h0M744.2 1167.6h0M745.1 1110.5h0M746.0 1167.0h0M746.9 1166.8h0M747.8 1166.7h0M748.7 1107.9h0M749.6 1165.5h0M750.5 1166.6h0M751.4 1165.6h0M752.3 1164.9h0M753.2 1108.9h0M754.1 1163.0h0M755.0 1113.2h0M755.9 1164.5h0M756.8 1139.4h0M757.7 1157.0h0M758.6 1165.7h0M759.5 1165.7h0M760.4 1112.4h0M761.3 1156.6h0M762.2 1166.8h0M763.1 1128.9h0M764.0 1116.1h0M764.9 1117.3h0M765.8 1167.6h0M766.7 1162.4h0M767.6 1153.7h0M768.5 1125.3h0M769.4 1127.0h0M770.3 1163.0h0M771.2 1171.7h0M772.1 1153.3h0M773.0 1172.2h0M773.9 1172.0h0M774.8 1174.2h0M775.7 1173.9h0M776.6 1156.3h0M777.5 1161.1h0M778.4 1176.1h0M779.3 1163.8h0M780.2 1165.4h0M781.1 1162.6h0M782.0 1162.8h0M782.9 1164.0h0M783.8 1175.1h0M784.7 1164.4h0M785.6 1164.0h0M786.5 1174.9h0M787.4 1164.9h0M788.3 1164.5h0M789.2 1162.6h0M790.1 1164.5h0M791.0 1176.1h0M791.9 1164.2h0M792.8 1177.3h0M793.7 1175.6h0M794.6 1176.7h0M795.5 1164.7h0M796.4 1163.6h0M797.3 1165.4h0M798.2 1177.7h0M799.1 1177.7h0M800.0 1167.0h0M800.9 1175.3h0M801.8 1175.7h0M802.7 1165.0h0M803.6 1164.2h0M804.5 1175.3h0M805.4 1174.9h0M806.3 1163.9h0M807.2 1163.9h0M808.1 1177.7h0M809.0 1176.8h0M809.9 1163.8h0M810.8 1162.9h0M811.7 1175.6h0M812.6 1166.8h0M813.5 1165.0h0M814.4 1163.0h0M815.3 1175.9h0M816.2 1165.3h0M817.1 1174.3h0M818.0 1166.6h0M818.9 1173.4h0M819.8 1174.8h0M820.7 1165.7h0M821.6 1177.8h0M822.5 1164.3h0M823.4 1177.4h0M824.3 1176.1h0M825.2 1176.7h0M826.1 1176.1h0M827.0 1166.1h0M827.9 1176.8h0M828.8 1159.2h0M829.7 1153.4h0M830.6 1147.7h0M831.5 1173.8h0M832.4 1167.1h0M833.3 1140.3h0M834.2 1132.7h0M835.1 1161.5h0M836.0 1128.7h0M836.9 1127.5h0M837.8 1167.8h0M838.7 1168.0h0M839.6 1122.7h0M840.5 1120.3h0M841.4 1116.9h0M842.3 1133.1h0M843.2 1149.3h0M844.1 1147.4h0M845.0 1149.0h0M845.9 1163.3h0M846.8 1164.5h0M847.7 1164.5h0M848.6 1119.7h0M849.5 1125.4h0M850.4 1128.6h0M851.3 1128.8h0M852.2 1162.9h0M853.1 1164.4h0M854.0 1162.2h0M854.9 1124.5h0M855.8 1164.9h0M856.7 1164.1h0M857.6 1162.8h0M858.5 1120.0h0M859.4 1164.9h0M860.3 1118.9h0M861.2 1163.6h0M862.1 1117.7h0M863.0 1114.7h0M863.9 1113.6h0M864.8 1123.2h0M865.7 1111.6h0M866.6 1163.6h0M867.5 1113.3h0M868.4 1167.3h0M869.3 1117.1h0M870.2 1167.4h0M871.1 1123.0h0M872.0 1122.8h0M872.9 1125.5h0M873.8 1128.0h0M874.7 1130.2h0M875.6 1139.1h0M876.5 1133.3h0M877.4 1139.3h0M878.3 1143.5h0M879.2 1174.6h0M880.1 1152.9h0M881.0 1158.1h0M881.9 1177.6h0M882.8 1177.5h0M883.7 1176.6h0M884.6 1177.3h0M885.5 1164.7h0M886.4 1166.2h0M887.3 1175.1h0M888.2 1174.5h0M889.1 1167.4h0M890.0 1169.4h0M890.9 1175.5h0M891.8 1168.2h0M892.7 1164.8h0M893.6 1171.8h0M894.5 1174.7h0M895.4 1176.0h0M896.3 1171.5h0M897.2 1176.7h0M898.1 1177.2h0M899.0 1177.3h0M899.9 1175.6h0M900.8 1177.7h0M901.7 1163.0h0M902.6 1175.8h0M903.5 1177.5h0M904.4 1164.7h0M905.3 1177.4h0M906.2 1172.1h0M907.1 1163.7h0M908.0 1177.0h0M908.9 1164.9h0M909.8 1176.5h0M910.7 1177.2h0M911.6 1176.7h0M912.5 1177.7h0M913.4 1164.1h0M914.3 1164.0h0M915.2 1165.8h0M916.1 1176.8h0M917.0 1170.3h0M917.9 1177.7h0M918.8 1175.7h0M919.7 1163.5h0M920.6 1172.9h0M921.5 1176.2h0M922.4 1164.7h0M923.3 1163.3h0M924.2 1174.2h0M925.1 1175.3h0M926.0 1177.6h0M926.9 1165.6h0M927.8 1168.0h0M928.7 1171.0h0M929.6 1176.9h0M930.5 1164.8h0M931.4 1177.1h0M932.3 1163.2h0M933.2 1175.4h0M934.1 1174.8h0M935.0 1138.0h0M935.9 1132.8h0M936.8 1174.8h0M937.7 1163.1h0M938.6 1118.0h0M939.5 1139.3h0M940.4 1164.2h0M941.3 1153.5h0M942.2 1149.2h0M943.1 1107.2h0M944.0 1103.1h0M944.9 1101.8h0M945.8 1165.0h0M946.7 1103.4h0M947.6 1099.6h0M948.5 1147.5h0M949.4 1099.0h0M950.3 1165.6h0M951.2 1167.2h0M952.1 1166.8h0M953.0 1168.1h0M953.9 1097.1h0M954.8 1166.2h0M955.7 1097.6h0M956.6 1118.1h0M957.5 1169.4h0M958.4 1162.7h0M959.3 1098.4h0M960.2 1097.0h0M961.1 1169.4h0M962.0 1170.1h0M962.9 1130.6h0M963.8 1168.7h0M964.7 1171.1h0M965.6 1171.0h0M966.5 1169.4h0M967.4 1122.9h0M968.3 1101.5h0M969.2 1171.5h0M970.1 1101.1h0M971.0 1101.5h0M971.9 1101.0h0M972.8 1102.4h0M973.7 1135.7h0M212.7 1210.2h0M212.8 1217.2h0M212.0 1223.9h0M212.2 1229.7h0M212.1 1241.5h0M212.4 1210.2h0M228.1 1137.2h0M228.4 1144.9h0M229.3 1152.7h0M228.1 1161.4h0M229.0 1164.6h0M228.1 1181.2h0M229.1 1184.2h0M228.5 1195.7h0M228.7 1203.9h0M228.0 1214.9h0M228.8 1137.2h0M238.8 1192.2h0M238.2 1199.4h0M239.3 1205.8h0M238.3 1216.1h0M238.9 1192.2h0M246.2 1192.2h0M246.4 1199.5h0M247.6 1207.6h0M247.3 1221.0h0M246.8 1224.6h0M246.8 1192.2h0M314.7 1074.2h0M314.2 1081.6h0M314.2 1086.4h0M314.5 1097.2h0M314.3 1097.6h0M313.5 1106.6h0M314.0 1074.2h0M326.3 1042.2h0M325.4 1050.4h0M326.7 1059.0h0M326.4 1067.9h0M326.5 1075.8h0M325.9 1080.9h0M326.5 1092.4h0M326.0 1042.2h0M346.2 1059.2h0M346.6 1067.6h0M345.9 1076.0h0M347.0 1084.5h0M347.0 1085.6h0M346.0 1092.0h0M346.1 1102.0h0M346.5 1059.2h0M440.3 1045.2h0M439.9 1053.0h0M440.1 1059.2h0M439.9 1069.3h0M440.1 1078.9h0M438.9 1080.4h0M440.1 1091.3h0M439.8 1093.3h0M440.1 1110.5h0M439.6 1099.3h0M439.6 1045.2h0M450.9 1081.2h0M451.4 1088.8h0M451.4 1095.3h0M451.0 1100.5h0M452.1 1107.0h0M451.2 1116.7h0M451.5 1081.2h0M527.6 1027.2h0M527.9 1035.0h0M528.5 1042.6h0M528.3 1046.1h0M528.5 1051.6h0M527.6 1059.5h0M527.8 1077.9h0M528.6 1073.2h0M528.6 1087.7h0M528.0 1090.2h0M528.0 1111.7h0M528.0 1027.2h0M558.1 1067.2h0M558.1 1076.3h0M557.8 1083.6h0M559.3 1088.7h0M559.1 1099.1h0M558.4 1104.2h0M558.7 1109.0h0M558.6 1067.2h0M628.5 1061.2h0M629.2 1068.3h0M628.8 1078.1h0M628.7 1080.1h0M629.2 1090.2h0M628.8 1096.4h0M628.5 1061.2h0M641.5 1070.2h0M642.0 1076.9h0M641.7 1085.4h0M642.5 1089.2h0M641.7 1070.2h0M648.8 1043.7h0M648.4 1052.3h0M648.7 1059.6h0M648.7 1071.4h0M647.6 1079.0h0M647.7 1081.7h0M648.3 1043.7h0M659.5 1045.2h0M659.0 1051.7h0M658.2 1060.4h0M659.3 1066.6h0M658.5 1076.4h0M658.6 1085.7h0M658.8 1090.4h0M658.9 1045.2h0M735.7 1074.2h0M735.8 1083.3h0M736.2 1090.0h0M735.8 1100.8h0M735.0 1104.6h0M736.0 1116.6h0M735.5 1074.2h0M760.5 1053.2h0M760.7 1060.1h0M760.2 1071.0h0M760.2 1078.8h0M760.0 1082.5h0M760.5 1089.7h0M761.4 1108.1h0M760.4 1102.1h0M760.7 1053.2h0M841.9 1027.2h0M842.3 1034.2h0M842.0 1040.0h0M842.2 1048.7h0M842.0 1061.8h0M843.1 1060.5h0M842.9 1071.0h0M842.8 1081.8h0M841.8 1082.8h0M842.4 1100.2h0M842.7 1103.1h0M842.0 1116.3h0M842.4 1027.2h0M846.7 1065.2h0M845.7 1072.6h0M845.6 1080.6h0M845.3 1089.3h0M846.1 1098.0h0M846.7 1100.0h0M845.6 1105.6h0M846.1 1108.8h0M846.0 1065.2h0M849.3 1086.2h0M849.5 1093.0h0M848.7 1098.3h0M849.7 1108.3h0M849.3 1115.6h0M848.8 1124.7h0M849.0 1086.2h0M864.4 1050.2h0M863.8 1057.3h0M863.8 1066.8h0M864.6 1070.1h0M864.0 1080.4h0M864.6 1089.8h0M863.7 1089.3h0M863.9 1094.5h0M864.6 1110.1h0M864.0 1050.2h0M867.6 1039.7h0M867.6 1047.1h0M868.1 1053.9h0M868.0 1065.1h0M867.8 1066.7h0M867.5 1081.6h0M868.1 1092.4h0M868.0 1098.2h0M868.1 1104.5h0M867.8 1100.0h0M867.5 1039.7h0M870.2 1065.2h0M869.3 1072.0h0M870.5 1080.6h0M869.5 1085.6h0M869.4 1091.9h0M870.8 1104.5h0M869.8 1114.4h0M869.3 1120.7h0M870.0 1065.2h0M942.7 1051.2h0M943.2 1057.4h0M942.6 1064.3h0M942.9 1070.3h0M943.5 1081.9h0M943.5 1082.7h0M942.6 1090.2h0M942.7 1106.3h0M943.0 1051.2h0M957.5 1070.2h0M957.9 1076.6h0M957.9 1082.9h0M957.5 1093.7h0M957.8 1093.8h0M957.4 1070.2h0M964.0 1065.2h0M963.3 1071.8h0M964.4 1079.5h0M963.8 1086.3h0M964.1 1092.6h0M964.6 1096.0h0M964.0 1065.2h0M333.0 1162.1h0M331.8 1166.1h0M332.8 1170.1h0M329.0 1174.1h0M332.9 1178.1h0M327.4 1182.1h0M329.9 1186.1h0M327.8 1190.1h0M329.7 1194.1h0M331.1 1198.1h0M331.3 1202.1h0M329.7 1206.1h0M329.1 1210.1h0M328.1 1214.1h0M329.4 1218.1h0M328.7 1222.1h0M328.2 1226.1h0M331.4 1230.1h0M330.1 1234.1h0M329.6 1238.1h0M328.2 1242.1h0M331.2 1246.1h0M328.2 1250.1h0M328.6 1254.1h0M330.4 1258.1h0M331.2 1262.1h0M332.8 1266.1h0M331.5 1270.1h0M332.7 1274.1h0M332.5 1278.1h0M331.3 1282.1h0M331.3 1286.1h0M327.4 1290.1h0M328.2 1294.1h0M327.1 1298.1h0M330.0 1309.8h0M328.5 1300.0h0M546.5 1162.8h0M544.0 1166.8h0M542.3 1170.8h0M535.7 1174.8h0M537.4 1178.8h0M533.9 1182.8h0M542.4 1186.8h0M548.8 1190.8h0M536.5 1194.8h0M531.8 1198.8h0M534.2 1202.8h0M537.4 1206.8h0M547.2 1210.8h0M545.5 1214.8h0M539.2 1218.8h0M532.8 1222.8h0M532.9 1226.8h0M533.8 1230.8h0M545.0 1234.8h0M539.5 1238.8h0M548.8 1242.8h0M547.4 1246.8h0M545.3 1250.8h0M539.6 1254.8h0M545.8 1258.8h0M533.3 1262.8h0M533.0 1266.8h0M541.1 1270.8h0M540.1 1274.8h0M534.8 1278.8h0M535.5 1282.8h0M531.4 1286.8h0M547.4 1290.8h0M543.8 1294.8h0M548.0 1298.8h0M548.6 1302.8h0M538.9 1306.8h0M544.2 1310.8h0M537.9 1314.8h0M545.6 1318.8h0M546.1 1322.8h0M533.4 1326.8h0M531.2 1330.8h0M534.9 1334.8h0M540.0 1410.8h0M535.5 1337.0h0M754.9 1162.8h0M752.7 1166.8h0M748.6 1170.8h0M757.6 1174.8h0M757.1 1178.8h0M753.6 1182.8h0M749.0 1186.8h0M758.3 1190.8h0M754.4 1194.8h0M749.3 1198.8h0M752.1 1202.8h0M755.4 1206.8h0M758.2 1210.8h0M753.8 1214.8h0M755.5 1218.8h0M750.8 1222.8h0M751.2 1226.8h0M758.5 1230.8h0M752.7 1234.8h0M749.6 1238.8h0M755.0 1242.8h0M749.9 1246.8h0M750.7 1250.8h0M753.5 1254.8h0M754.9 1258.8h0M755.5 1262.8h0M756.3 1266.8h0M753.3 1270.8h0M749.2 1274.8h0M756.5 1278.8h0M749.1 1282.8h0M753.7 1286.8h0M752.9 1290.8h0M755.9 1294.8h0M756.4 1298.8h0M751.1 1302.8h0M755.6 1306.8h0M756.1 1310.8h0M753.7 1314.8h0M750.1 1318.8h0M758.5 1322.8h0M755.1 1326.8h0M749.2 1330.8h0M751.1 1334.8h0M759.4 1338.8h0M751.0 1342.8h0M752.8 1346.8h0M757.2 1350.8h0M757.6 1354.8h0M755.5 1358.8h0M756.7 1362.8h0M748.9 1366.8h0M749.5 1370.8h0M754.0 1370.8h0M751.2 1372.0h0M859.1 1160.9h0M857.3 1164.9h0M849.7 1168.9h0M849.8 1172.9h0M851.7 1176.9h0M858.6 1180.9h0M851.5 1184.9h0M856.0 1188.9h0M858.6 1192.9h0M855.7 1196.9h0M858.5 1200.9h0M851.9 1204.9h0M850.8 1208.9h0M849.5 1212.9h0M856.9 1216.9h0M850.3 1220.9h0M859.0 1224.9h0M856.4 1228.9h0M851.2 1232.9h0M857.4 1236.9h0M850.9 1240.9h0M854.4 1244.9h0M850.4 1248.9h0M857.2 1252.9h0M858.2 1256.9h0M854.3 1410.8h0M851.8 1258.0h0M855.0 1353.0h0M536.0 1382.0h0M544.0 1382.0h0M540.0 1360.0h0M538.0 1370.0h0" fill="none" stroke="#b4a76c" stroke-width="10.4" stroke-linecap="round"/></g><rect x="151" y="1027" width="3" height="390" fill="#3a3a3a"/><rect x="1412" y="1069.7" width="804" height="2" fill="#e4e4e4"/><rect x="1412" y="1135.7" width="804" height="2" fill="#e4e4e4"/><rect x="1412" y="1201.7" width="804" height="2" fill="#e4e4e4"/><rect x="1412" y="1267.7" width="804" height="2" fill="#e4e4e4"/><rect x="1412" y="1333.7" width="804" height="2" fill="#e4e4e4"/><rect x="1754" y="1027" width="2" height="363" fill="#e4e4e4"/><rect x="1961" y="1027" width="2" height="363" fill="#e4e4e4"/><text x="1404" y="1035.6" text-anchor="end" font-size="24" font-weight="bold" fill="#000">24.7</text><text x="1404" y="1079.3" text-anchor="end" font-size="24" font-weight="normal" fill="#000">24.0</text><text x="1404" y="1145.3" text-anchor="end" font-size="24" font-weight="normal" fill="#000">23.0</text><text x="1404" y="1211.3" text-anchor="end" font-size="24" font-weight="normal" fill="#000">22.0</text><text x="1404" y="1277.3" text-anchor="end" font-size="24" font-weight="normal" fill="#000">21.0</text><text x="1404" y="1343.3" text-anchor="end" font-size="24" font-weight="normal" fill="#000">20.0</text><text x="1404" y="1398.2" text-anchor="end" font-size="24" font-weight="bold" fill="#000">19.2</text><text transform="translate(1409,1420) rotate(45)" font-size="24" font-weight="bold" fill="#000">Thu Jan 11, 04 PM</text><text transform="translate(1753,1420) rotate(45)" font-size="24" font-weight="normal" fill="#000">Mon Jan 15</text><text transform="translate(1960,1420) rotate(45)" font-size="24" font-weight="normal" fill="#000">Wed Jan 17</text><text transform="translate(2214,1420) rotate(45)" font-size="24" font-weight="bold" fill="#000">Fri Jan 19, 11 AM</text><text transform="translate(1318.5,1273.5) rotate(-90)" font-size="28.2" fill="#000">Fahrenheit</text><text x="1812" y="1541" text-anchor="middle" font-size="26.5" fill="#000">Time</text><circle cx="2015" cy="997" r="12" fill="#ff5a5f"/><text x="2031" y="1004.7" font-size="24" fill="#000" textLength="133" lengthAdjust="spacingAndGlyphs">Temperature</text><clipPath id="cpt"><rect x="1412" y="1022" width="804" height="370"/></clipPath><g clip-path="url(#cpt)"><path d="M1411.0 1111.5L1413.8 1112.5L1418.1 1129.3L1423.9 1126.8L1427.6 1118.0L1432.7 1114.2L1436.4 1111.7L1440.7 1113.0L1444.7 1066.0L1449.0 1028.8L1453.3 1032.6L1457.3 1098.4L1461.6 1154.4L1465.8 1157.0L1470.4 1119.7L1474.6 1092.9L1478.6 1079.0L1483.4 1062.0L1488.0 1074.0L1492.2 1085.3L1496.2 1096.0L1500.5 1119.7L1505.0 1160.2L1509.3 1221.0L1513.6 1264.5L1518.0 1284.3L1522.4 1303.4L1526.4 1319.0L1530.7 1317.2L1535.2 1315.2L1539.4 1334.6L1543.7 1341.6L1548.2 1353.7L1552.5 1379.3L1556.8 1388.0L1560.8 1363.0L1565.3 1364.7L1569.6 1349.1L1574.1 1343.6L1578.4 1310.2L1582.7 1283.8L1586.7 1275.8L1591.5 1293.4L1595.5 1320.2L1600.5 1329.5L1603.8 1366.7L1608.0 1356.7L1612.6 1383.0L1617.1 1358.0L1621.4 1361.7L1625.7 1363.7L1630.2 1359.7L1634.4 1361.7L1638.5 1362.2L1642.7 1359.2L1647.0 1367.2L1650.8 1354.7L1655.3 1342.4L1659.8 1357.2L1664.1 1366.2L1668.4 1371.3L1672.4 1344.6L1677.2 1341.6L1681.7 1337.0L1685.5 1306.4L1690.5 1304.4L1694.7 1324.0L1698.5 1337.8L1703.5 1327.0L1707.6 1343.6L1711.8 1369.2L1716.1 1378.8L1720.6 1361.7L1724.9 1378.0L1729.4 1373.0L1733.7 1376.3L1737.7 1382.3L1742.5 1381.8L1746.3 1374.8L1750.8 1376.8L1755.0 1374.8L1759.1 1378.8L1763.3 1381.8L1767.9 1378.0L1772.1 1372.3L1776.4 1371.8L1780.4 1344.6L1785.2 1282.6L1789.2 1226.0L1793.8 1209.0L1798.8 1208.0L1802.6 1235.6L1807.1 1267.5L1811.4 1290.9L1815.1 1299.4L1819.6 1299.4L1823.9 1298.4L1828.2 1311.5L1832.7 1309.4L1837.0 1319.0L1841.5 1326.5L1845.8 1326.0L1850.3 1326.5L1854.6 1321.0L1858.6 1324.0L1862.9 1319.0L1867.4 1311.5L1871.7 1306.4L1875.9 1302.7L1880.0 1267.5L1884.2 1233.0L1888.5 1200.4L1893.0 1186.3L1897.5 1194.6L1901.8 1188.8L1906.1 1216.5L1910.6 1226.0L1914.4 1254.2L1918.6 1247.4L1922.7 1273.3L1926.9 1273.8L1931.2 1275.0L1935.7 1278.3L1940.3 1286.8L1944.5 1292.6L1948.8 1271.3L1953.3 1275.0L1957.8 1281.3L1962.1 1293.4L1966.4 1334.6L1970.4 1340.4L1974.7 1342.1L1978.9 1332.8L1983.5 1338.6L1988.0 1305.2L1992.0 1251.2L1996.3 1235.6L2000.6 1214.0L2005.1 1198.9L2009.4 1252.4L2013.9 1293.4L2018.2 1312.7L2022.7 1338.6L2026.5 1363.0L2030.7 1368.7L2035.3 1373.0L2039.5 1363.7L2044.0 1374.8L2048.3 1370.5L2052.8 1367.2L2056.6 1359.2L2061.1 1356.7L2065.4 1356.2L2069.7 1369.2L2073.7 1358.7L2078.0 1359.7L2082.5 1354.2L2086.8 1356.7L2091.0 1307.2L2095.6 1244.1L2099.8 1207.9L2103.8 1197.9L2108.1 1194.6L2112.4 1245.4L2116.9 1265.5L2121.2 1285.6L2125.7 1332.0L2130.0 1336.0L2134.5 1352.4L2138.8 1364.7L2143.3 1368.0L2147.6 1371.8L2151.6 1359.2L2155.9 1346.6L2160.1 1334.6L2164.6 1342.1L2168.9 1356.7L2172.9 1331.0L2177.2 1336.0L2181.7 1333.6L2186.0 1340.4L2190.5 1298.9L2195.0 1264.2L2199.2 1196.4L2203.0 1178.8L2207.5 1163.7L2211.8 1174.5L2215.1 1193.4L2219.0 1200.0" fill="none" stroke="#ff5a5f" stroke-width="2.8" stroke-linejoin="round"/><path d="M1411.0 1111.5h0M1413.8 1112.5h0M1418.1 1129.3h0M1423.9 1126.8h0M1427.6 1118.0h0M1432.7 1114.2h0M1436.4 1111.7h0M1440.7 1113.0h0M1444.7 1066.0h0M1449.0 1028.8h0M1453.3 1032.6h0M1457.3 1098.4h0M1461.6 1154.4h0M1465.8 1157.0h0M1470.4 1119.7h0M1474.6 1092.9h0M1478.6 1079.0h0M1483.4 1062.0h0M1488.0 1074.0h0M1492.2 1085.3h0M1496.2 1096.0h0M1500.5 1119.7h0M1505.0 1160.2h0M1509.3 1221.0h0M1513.6 1264.5h0M1518.0 1284.3h0M1522.4 1303.4h0M1526.4 1319.0h0M1530.7 1317.2h0M1535.2 1315.2h0M1539.4 1334.6h0M1543.7 1341.6h0M1548.2 1353.7h0M1552.5 1379.3h0M1556.8 1388.0h0M1560.8 1363.0h0M1565.3 1364.7h0M1569.6 1349.1h0M1574.1 1343.6h0M1578.4 1310.2h0M1582.7 1283.8h0M1586.7 1275.8h0M1591.5 1293.4h0M1595.5 1320.2h0M1600.5 1329.5h0M1603.8 1366.7h0M1608.0 1356.7h0M1612.6 1383.0h0M1617.1 1358.0h0M1621.4 1361.7h0M1625.7 1363.7h0M1630.2 1359.7h0M1634.4 1361.7h0M1638.5 1362.2h0M1642.7 1359.2h0M1647.0 1367.2h0M1650.8 1354.7h0M1655.3 1342.4h0M1659.8 1357.2h0M1664.1 1366.2h0M1668.4 1371.3h0M1672.4 1344.6h0M1677.2 1341.6h0M1681.7 1337.0h0M1685.5 1306.4h0M1690.5 1304.4h0M1694.7 1324.0h0M1698.5 1337.8h0M1703.5 1327.0h0M1707.6 1343.6h0M1711.8 1369.2h0M1716.1 1378.8h0M1720.6 1361.7h0M1724.9 1378.0h0M1729.4 1373.0h0M1733.7 1376.3h0M1737.7 1382.3h0M1742.5 1381.8h0M1746.3 1374.8h0M1750.8 1376.8h0M1755.0 1374.8h0M1759.1 1378.8h0M1763.3 1381.8h0M1767.9 1378.0h0M1772.1 1372.3h0M1776.4 1371.8h0M1780.4 1344.6h0M1785.2 1282.6h0M1789.2 1226.0h0M1793.8 1209.0h0M1798.8 1208.0h0M1802.6 1235.6h0M1807.1 1267.5h0M1811.4 1290.9h0M1815.1 1299.4h0M1819.6 1299.4h0M1823.9 1298.4h0M1828.2 1311.5h0M1832.7 1309.4h0M1837.0 1319.0h0M1841.5 1326.5h0M1845.8 1326.0h0M1850.3 1326.5h0M1854.6 1321.0h0M1858.6 1324.0h0M1862.9 1319.0h0M1867.4 1311.5h0M1871.7 1306.4h0M1875.9 1302.7h0M1880.0 1267.5h0M1884.2 1233.0h0M1888.5 1200.4h0M1893.0 1186.3h0M1897.5 1194.6h0M1901.8 1188.8h0M1906.1 1216.5h0M1910.6 1226.0h0M1914.4 1254.2h0M1918.6 1247.4h0M1922.7 1273.3h0M1926.9 1273.8h0M1931.2 1275.0h0M1935.7 1278.3h0M1940.3 1286.8h0M1944.5 1292.6h0M1948.8 1271.3h0M1953.3 1275.0h0M1957.8 1281.3h0M1962.1 1293.4h0M1966.4 1334.6h0M1970.4 1340.4h0M1974.7 1342.1h0M1978.9 1332.8h0M1983.5 1338.6h0M1988.0 1305.2h0M1992.0 1251.2h0M1996.3 1235.6h0M2000.6 1214.0h0M2005.1 1198.9h0M2009.4 1252.4h0M2013.9 1293.4h0M2018.2 1312.7h0M2022.7 1338.6h0M2026.5 1363.0h0M2030.7 1368.7h0M2035.3 1373.0h0M2039.5 1363.7h0M2044.0 1374.8h0M2048.3 1370.5h0M2052.8 1367.2h0M2056.6 1359.2h0M2061.1 1356.7h0M2065.4 1356.2h0M2069.7 1369.2h0M2073.7 1358.7h0M2078.0 1359.7h0M2082.5 1354.2h0M2086.8 1356.7h0M2091.0 1307.2h0M2095.6 1244.1h0M2099.8 1207.9h0M2103.8 1197.9h0M2108.1 1194.6h0M2112.4 1245.4h0M2116.9 1265.5h0M2121.2 1285.6h0M2125.7 1332.0h0M2130.0 1336.0h0M2134.5 1352.4h0M2138.8 1364.7h0M2143.3 1368.0h0M2147.6 1371.8h0M2151.6 1359.2h0M2155.9 1346.6h0M2160.1 1334.6h0M2164.6 1342.1h0M2168.9 1356.7h0M2172.9 1331.0h0M2177.2 1336.0h0M2181.7 1333.6h0M2186.0 1340.4h0M2190.5 1298.9h0M2195.0 1264.2h0M2199.2 1196.4h0M2203.0 1178.8h0M2207.5 1163.7h0M2211.8 1174.5h0M2215.1 1193.4h0M2219.0 1200.0h0" fill="none" stroke="#ff5a5f" stroke-width="9.5" stroke-linecap="round"/></g><rect x="1409.5" y="1027" width="3" height="363" fill="#3a3a3a"/></svg>
</body></html>
